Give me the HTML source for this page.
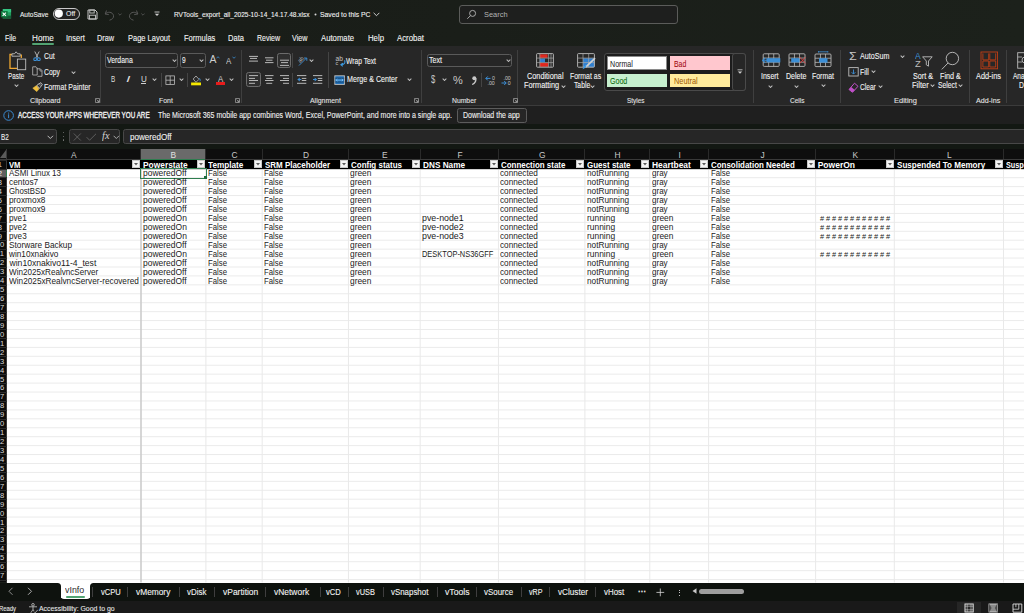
<!DOCTYPE html>
<html><head><meta charset="utf-8"><style>
html,body{margin:0;padding:0;}
body{width:1024px;height:613px;overflow:hidden;position:relative;background:#1a1e19;font-family:"Liberation Sans",sans-serif;}
div,span,svg{position:absolute;}
span{white-space:nowrap;line-height:1;transform-origin:0 0;}
</style></head><body>
<div style="left:0px;top:0px;width:1024px;height:46px;background:linear-gradient(90deg,#181c17 0%,#1a1e19 45%,#1c211b 100%);"></div>
<div style="left:0px;top:46px;width:1024px;height:59px;background:#272727;"></div>
<div style="left:0px;top:105px;width:1024px;height:1px;background:#3b3b3b;"></div>
<div style="left:0px;top:106px;width:1024px;height:18px;background:#1f1f1f;"></div>
<div style="left:0px;top:124px;width:1024px;height:24.5px;background:#131813;"></div>
<svg style="left:0px;top:8px" width="12" height="12" viewBox="0 0 12 12"><rect x="2.8" y="1" width="8.3" height="10" rx="0.8" fill="#1f9d5c"/><rect x="2.8" y="1" width="8.3" height="3.3" fill="#33c481"/><rect x="2.8" y="7.6" width="8.3" height="3.4" fill="#185c37"/><rect x="0.9" y="3" width="6.8" height="6.3" rx="0.6" fill="#107c41"/><path d="M2.6 4.6 L5.9 7.8 M5.9 4.6 L2.6 7.8" stroke="#fff" stroke-width="1.1"/></svg>
<div style="left:52.9px;top:7.5px;width:27px;height:12.3px;background:#232323;border:1px solid #c9c9c9;box-sizing:border-box;border-radius:6.2px;"></div>
<svg style="left:54px;top:9px" width="10" height="10" viewBox="0 0 10 10"><circle cx="4.8" cy="4.6" r="4.1" fill="#ffffff"/></svg>
<svg style="left:87px;top:8.5px" width="11" height="11" viewBox="0 0 11 11"><path d="M1 1 H8 L10 3 V10 H1 Z" fill="none" stroke="#c9c9c9" stroke-width="1"/><rect x="2.8" y="1" width="4.4" height="3" fill="none" stroke="#c9c9c9" stroke-width="0.9"/><rect x="2.5" y="6.2" width="6" height="3.8" fill="none" stroke="#c9c9c9" stroke-width="0.9"/></svg>
<svg style="left:104px;top:8.5px" width="11" height="12" viewBox="0 0 11 12"><path d="M2.5 1.5 L1.2 5 L4.8 5.6 M1.4 5 C3.5 2.5 8.5 2.5 9.5 6.5 C10 9 8 10.5 5.5 11.2" fill="none" stroke="#5c5c5c" stroke-width="0.9"/></svg>
<svg style="left:118px;top:12.5px" width="4" height="3" viewBox="0 0 4 3"><path d="M0.3 0.5 L2 2.2 L3.7 0.5" fill="none" stroke="#5c5c5c" stroke-width="0.8"/></svg>
<svg style="left:127.5px;top:8.5px" width="11" height="12" viewBox="0 0 11 12"><path d="M8.5 1.5 L9.8 5 L6.2 5.6 M9.6 5 C7.5 2.5 2.5 2.5 1.5 6.5 C1 9 3 10.5 5.5 11.2" fill="none" stroke="#5c5c5c" stroke-width="0.9"/></svg>
<svg style="left:141px;top:12.5px" width="4" height="3" viewBox="0 0 4 3"><path d="M0.3 0.5 L2 2.2 L3.7 0.5" fill="none" stroke="#5c5c5c" stroke-width="0.8"/></svg>
<svg style="left:153.5px;top:11px" width="6" height="6" viewBox="0 0 6 6"><path d="M0.5 1 H5.5" stroke="#d0d0d0" stroke-width="0.9"/><path d="M0.8 2.8 L3 5 L5.2 2.8 Z" fill="#d0d0d0"/></svg>
<svg style="left:313.5px;top:12.5px" width="3" height="3" viewBox="0 0 3 3"><circle cx="1.5" cy="1.5" r="1" fill="#d8d8d8"/></svg>
<svg style="left:372.5px;top:11.5px" width="7" height="5" viewBox="0 0 7 5"><path d="M0.6 0.8 L3.5 3.7 L6.4 0.8" fill="none" stroke="#e0e0e0" stroke-width="0.9"/></svg>
<div style="left:459px;top:4.5px;width:219.3px;height:19px;background:#1e1f1e;border:1px solid #5b5c5a;box-sizing:border-box;border-radius:3px;"></div>
<svg style="left:466px;top:8.5px" width="12" height="12" viewBox="0 0 12 12"><circle cx="6.6" cy="4.4" r="3.0" fill="none" stroke="#b8b8b8" stroke-width="0.9"/><path d="M4.5 6.6 L1.3 9.8" stroke="#b8b8b8" stroke-width="0.9"/></svg>
<div style="left:32px;top:43px;width:22px;height:2px;background:#52a372;border-radius:1px;"></div>
<div style="left:100px;top:49.5px;width:1px;height:53px;background:#3f3f3f;"></div>
<div style="left:241px;top:49.5px;width:1px;height:53px;background:#3f3f3f;"></div>
<div style="left:421px;top:49.5px;width:1px;height:53px;background:#3f3f3f;"></div>
<div style="left:517px;top:49.5px;width:1px;height:53px;background:#3f3f3f;"></div>
<div style="left:753px;top:49.5px;width:1px;height:53px;background:#3f3f3f;"></div>
<div style="left:840px;top:49.5px;width:1px;height:53px;background:#3f3f3f;"></div>
<div style="left:969px;top:49.5px;width:1px;height:53px;background:#3f3f3f;"></div>
<div style="left:1006px;top:49.5px;width:1px;height:53px;background:#3f3f3f;"></div>
<svg style="left:94.5px;top:97.5px" width="5" height="5" viewBox="0 0 5 5"><path d="M0.5 0.5 H4.5 V4.5 H0.5 Z" fill="none" stroke="#a8a8a8" stroke-width="0.7"/><path d="M1.6 1.6 L4 4 M2.2 4 H4 V2.2" fill="none" stroke="#a8a8a8" stroke-width="0.7"/></svg>
<svg style="left:235.3px;top:97.5px" width="5" height="5" viewBox="0 0 5 5"><path d="M0.5 0.5 H4.5 V4.5 H0.5 Z" fill="none" stroke="#a8a8a8" stroke-width="0.7"/><path d="M1.6 1.6 L4 4 M2.2 4 H4 V2.2" fill="none" stroke="#a8a8a8" stroke-width="0.7"/></svg>
<svg style="left:413.8px;top:97.5px" width="5" height="5" viewBox="0 0 5 5"><path d="M0.5 0.5 H4.5 V4.5 H0.5 Z" fill="none" stroke="#a8a8a8" stroke-width="0.7"/><path d="M1.6 1.6 L4 4 M2.2 4 H4 V2.2" fill="none" stroke="#a8a8a8" stroke-width="0.7"/></svg>
<svg style="left:513px;top:97.5px" width="5" height="5" viewBox="0 0 5 5"><path d="M0.5 0.5 H4.5 V4.5 H0.5 Z" fill="none" stroke="#a8a8a8" stroke-width="0.7"/><path d="M1.6 1.6 L4 4 M2.2 4 H4 V2.2" fill="none" stroke="#a8a8a8" stroke-width="0.7"/></svg>
<svg style="left:8px;top:50px" width="20" height="22" viewBox="0 0 20 22"><path d="M3.9 4.4 H2 V18.3 H9" fill="none" stroke="#f0a830" stroke-width="1.3"/><path d="M13.3 4.4 V8" fill="none" stroke="#f0a830" stroke-width="1.3"/><path d="M3.9 6.2 V3.8 H6.5 L8.1 1.8 L9.7 3.8 H12.2 V6.2 Z" fill="none" stroke="#bdbdbd" stroke-width="0.9"/><rect x="9.4" y="9.1" width="8.3" height="10.6" fill="#262626" stroke="#bdbdbd" stroke-width="0.9"/></svg>
<svg style="left:13.5px;top:84.2px" width="5" height="4" viewBox="0 0 5 4"><path d="M0.5 0.8 L2.5 2.9 L4.5 0.8 L3.6 0.8 L2.5 1.9 L1.4 0.8 Z" fill="#d4d4d4" stroke="#d4d4d4" stroke-width="0.35"/></svg>
<svg style="left:33px;top:51px" width="8" height="10" viewBox="0 0 8 10"><path d="M1.8 0.5 L5 6.8 M6.2 0.5 L3 6.8" stroke="#bdbdbd" stroke-width="0.9"/><circle cx="2.2" cy="8.2" r="1.4" fill="none" stroke="#3c8fd6" stroke-width="1.1"/><circle cx="5.8" cy="8.2" r="1.4" fill="none" stroke="#3c8fd6" stroke-width="1.1"/></svg>
<svg style="left:31.5px;top:66px" width="11" height="11" viewBox="0 0 11 11"><path d="M0.7 0.8 H4 L5.2 2 V9 H0.7 Z" fill="none" stroke="#bdbdbd" stroke-width="0.8"/><path d="M4.6 2.8 H8.3 L10 4.5 V10.3 H5.4" fill="none" stroke="#bdbdbd" stroke-width="0.8"/><path d="M8 3 V5 H10" fill="none" stroke="#bdbdbd" stroke-width="0.7"/></svg>
<svg style="left:70.8px;top:70.5px" width="5" height="4" viewBox="0 0 5 4"><path d="M0.5 0.8 L2.5 2.9 L4.5 0.8 L3.6 0.8 L2.5 1.9 L1.4 0.8 Z" fill="#d4d4d4" stroke="#d4d4d4" stroke-width="0.35"/></svg>
<svg style="left:31.5px;top:81.5px" width="11" height="10" viewBox="0 0 11 10"><path d="M0.8 6.2 L4.5 3.6 L7 6.8 L4.8 9.6 Z" fill="#f0c040" stroke="#f0c040" stroke-width="0.6"/><path d="M5 3.2 L8.8 0.6 L10.4 2.4 L7.4 6.4 Z" fill="none" stroke="#cfcfcf" stroke-width="0.8"/><path d="M6.4 1.6 L8.8 4.4 M7.6 1 L9.6 3.3" stroke="#cfcfcf" stroke-width="0.5"/></svg>
<div style="left:105.3px;top:53.3px;width:73.1px;height:14.3px;background:#262626;border:1px solid #5a5a5a;box-sizing:border-box;border-radius:2.5px;"></div>
<svg style="left:172.3px;top:59.2px" width="5" height="4" viewBox="0 0 5 4"><path d="M0.5 0.8 L2.5 2.9 L4.5 0.8 L3.6 0.8 L2.5 1.9 L1.4 0.8 Z" fill="#d4d4d4" stroke="#d4d4d4" stroke-width="0.35"/></svg>
<div style="left:180.2px;top:53.3px;width:25.5px;height:14.3px;background:#262626;border:1px solid #5a5a5a;box-sizing:border-box;border-radius:2.5px;"></div>
<svg style="left:199.3px;top:59.2px" width="5" height="4" viewBox="0 0 5 4"><path d="M0.5 0.8 L2.5 2.9 L4.5 0.8 L3.6 0.8 L2.5 1.9 L1.4 0.8 Z" fill="#d4d4d4" stroke="#d4d4d4" stroke-width="0.35"/></svg>
<svg style="left:215.5px;top:55.5px" width="4" height="3" viewBox="0 0 4 3"><path d="M0.5 2.3 L2 0.7 L3.5 2.3" fill="none" stroke="#3c8fd6" stroke-width="0.8"/></svg>
<svg style="left:231.5px;top:55.5px" width="4" height="3" viewBox="0 0 4 3"><path d="M0.5 0.7 L2 2.3 L3.5 0.7" fill="none" stroke="#3c8fd6" stroke-width="0.8"/></svg>
<div style="left:140.5px;top:83.3px;width:5.5px;height:0.7px;background:#cfcfcf;"></div>
<svg style="left:152.0px;top:78.2px" width="5" height="4" viewBox="0 0 5 4"><path d="M0.5 0.8 L2.5 2.9 L4.5 0.8 L3.6 0.8 L2.5 1.9 L1.4 0.8 Z" fill="#d4d4d4" stroke="#d4d4d4" stroke-width="0.35"/></svg>
<div style="left:161px;top:72.8px;width:1px;height:14px;background:#444444;"></div>
<svg style="left:164.5px;top:74.5px" width="10" height="10" viewBox="0 0 10 10"><rect x="0.9" y="0.9" width="8.6" height="8.6" fill="none" stroke="#c4c4c4" stroke-width="0.75"/><path d="M5.2 0.9 V9.5 M0.9 5.2 H9.5" stroke="#c4c4c4" stroke-width="0.75"/></svg>
<svg style="left:178.5px;top:78.2px" width="5" height="4" viewBox="0 0 5 4"><path d="M0.5 0.8 L2.5 2.9 L4.5 0.8 L3.6 0.8 L2.5 1.9 L1.4 0.8 Z" fill="#d4d4d4" stroke="#d4d4d4" stroke-width="0.35"/></svg>
<div style="left:187px;top:72.8px;width:1px;height:14px;background:#444444;"></div>
<svg style="left:191px;top:74.5px" width="11" height="11" viewBox="0 0 11 11"><path d="M2.2 4 L5 1 L8 4.3 L5 7.3 Z" fill="none" stroke="#bdbdbd" stroke-width="0.8"/><path d="M8.4 3.2 C9.4 4.5 9.5 5.5 8.8 6.3" fill="none" stroke="#3c8fd6" stroke-width="0.9"/><rect x="0.1" y="7.5" width="9.9" height="2.8" fill="#f5e800"/></svg>
<svg style="left:204.6px;top:78.2px" width="5" height="4" viewBox="0 0 5 4"><path d="M0.5 0.8 L2.5 2.9 L4.5 0.8 L3.6 0.8 L2.5 1.9 L1.4 0.8 Z" fill="#d4d4d4" stroke="#d4d4d4" stroke-width="0.35"/></svg>
<div style="left:215.9px;top:82px;width:9.3px;height:2.8px;background:#e81c1c;"></div>
<svg style="left:229.0px;top:78.2px" width="5" height="4" viewBox="0 0 5 4"><path d="M0.5 0.8 L2.5 2.9 L4.5 0.8 L3.6 0.8 L2.5 1.9 L1.4 0.8 Z" fill="#d4d4d4" stroke="#d4d4d4" stroke-width="0.35"/></svg>
<svg style="left:249px;top:55px" width="14" height="14" viewBox="0 0 14 14"><rect x="0" y="0.9" width="9" height="1.0" fill="#b8b8b8"/><rect x="1" y="2.9" width="7" height="1.0" fill="#b8b8b8"/><rect x="0" y="5.6" width="9" height="1.0" fill="#b8b8b8"/></svg>
<svg style="left:264.6px;top:55px" width="14" height="14" viewBox="0 0 14 14"><rect x="0" y="2.3" width="8.5" height="1.0" fill="#b8b8b8"/><rect x="1" y="4.7" width="6.5" height="1.0" fill="#b8b8b8"/><rect x="0" y="7.1" width="8.5" height="1.0" fill="#b8b8b8"/></svg>
<div style="left:277.2px;top:53.3px;width:14.1px;height:14.3px;background:#2f2f2f;border:1px solid #6c6c6c;box-sizing:border-box;border-radius:2.5px;"></div>
<svg style="left:280px;top:55px" width="14" height="14" viewBox="0 0 14 14"><rect x="0" y="4.7" width="9" height="1.0" fill="#b8b8b8"/><rect x="1" y="7.1" width="7" height="1.0" fill="#b8b8b8"/><rect x="0" y="9.9" width="9" height="1.0" fill="#b8b8b8"/></svg>
<div style="left:292px;top:53.3px;width:1px;height:14.5px;background:#444444;"></div>
<svg style="left:296.5px;top:54.5px" width="12" height="12" viewBox="0 0 12 12"><text x="0.5" y="6" font-size="5.5" fill="#c0c0c0" font-family="Liberation Sans" transform="rotate(-45 4 4)">ab</text><path d="M2 10.5 L9.5 3" stroke="#3c8fd6" stroke-width="0.9"/><path d="M7 3 H9.8 V5.8" fill="none" stroke="#3c8fd6" stroke-width="0.9"/></svg>
<svg style="left:308.7px;top:59.2px" width="5" height="4" viewBox="0 0 5 4"><path d="M0.5 0.8 L2.5 2.9 L4.5 0.8 L3.6 0.8 L2.5 1.9 L1.4 0.8 Z" fill="#d4d4d4" stroke="#d4d4d4" stroke-width="0.35"/></svg>
<div style="left:246.2px;top:72.3px;width:14.4px;height:14.4px;background:#2f2f2f;border:1px solid #6c6c6c;box-sizing:border-box;border-radius:2.5px;"></div>
<svg style="left:249px;top:74px" width="14" height="14" viewBox="0 0 14 14"><rect x="0" y="1.1" width="9" height="1.0" fill="#b8b8b8"/><rect x="0" y="3.9" width="6" height="1.0" fill="#b8b8b8"/><rect x="0" y="6" width="9" height="1.0" fill="#b8b8b8"/><rect x="0" y="8.8" width="6" height="1.0" fill="#b8b8b8"/></svg>
<svg style="left:264.6px;top:74px" width="14" height="14" viewBox="0 0 14 14"><rect x="0" y="1.1" width="8.5" height="1.0" fill="#b8b8b8"/><rect x="1.2" y="3.9" width="6" height="1.0" fill="#b8b8b8"/><rect x="0" y="6" width="8.5" height="1.0" fill="#b8b8b8"/><rect x="1.2" y="8.8" width="6" height="1.0" fill="#b8b8b8"/></svg>
<svg style="left:280px;top:74px" width="14" height="14" viewBox="0 0 14 14"><rect x="0" y="1.1" width="9" height="1.0" fill="#b8b8b8"/><rect x="3" y="3.9" width="6" height="1.0" fill="#b8b8b8"/><rect x="0" y="6" width="9" height="1.0" fill="#b8b8b8"/><rect x="3" y="8.8" width="6" height="1.0" fill="#b8b8b8"/></svg>
<div style="left:292px;top:72.8px;width:1px;height:14.2px;background:#444444;"></div>
<svg style="left:297px;top:74px" width="10" height="10" viewBox="0 0 10 10"><rect x="0" y="1.1" width="9.3" height="1" fill="#b8b8b8"/><rect x="4.8" y="3.9" width="4.5" height="1" fill="#b8b8b8"/><rect x="4.8" y="6" width="4.5" height="1" fill="#b8b8b8"/><rect x="0" y="8.8" width="9.3" height="1" fill="#b8b8b8"/><path d="M0.3 5.5 L2.8 3.6 V7.4 Z" fill="#3c8fd6"/><rect x="2" y="5" width="2.3" height="1" fill="#3c8fd6"/></svg>
<svg style="left:313px;top:74px" width="10" height="10" viewBox="0 0 10 10"><rect x="0" y="1.1" width="9.3" height="1" fill="#b8b8b8"/><rect x="4.8" y="3.9" width="4.5" height="1" fill="#b8b8b8"/><rect x="4.8" y="6" width="4.5" height="1" fill="#b8b8b8"/><rect x="0" y="8.8" width="9.3" height="1" fill="#b8b8b8"/><path d="M4.2 5.5 L1.7 3.6 V7.4 Z" fill="#3c8fd6"/><rect x="0" y="5" width="2.3" height="1" fill="#3c8fd6"/></svg>
<div style="left:328px;top:52px;width:1px;height:36px;background:#444444;"></div>
<svg style="left:334.5px;top:55px" width="11" height="12" viewBox="0 0 11 12"><text x="0.6" y="6.3" font-size="6.6" fill="#c4c4c4" font-family="Liberation Sans">ab</text><text x="0.6" y="10.2" font-size="5.4" fill="#c4c4c4" font-family="Liberation Sans">c</text><path d="M9.6 5.2 C10.6 7.6 9.6 9.6 6.4 9.8 M7.8 8.2 L5.9 9.8 L7.8 11.2" fill="none" stroke="#3c9ae0" stroke-width="1.1"/></svg>
<svg style="left:333.5px;top:74.5px" width="11" height="10" viewBox="0 0 11 10"><rect x="0.8" y="0.8" width="9.6" height="8.6" fill="#1f6fb8" stroke="#c0c0c0" stroke-width="0.9"/><path d="M0.8 3.2 H10.4 M0.8 7 H10.4" stroke="#16314d" stroke-width="0.6"/><path d="M2.2 5.1 H9 M3.4 4 L2.2 5.1 L3.4 6.2 M7.8 4 L9 5.1 L7.8 6.2" fill="none" stroke="#8fd0ff" stroke-width="0.7"/></svg>
<svg style="left:406.5px;top:78.4px" width="5" height="4" viewBox="0 0 5 4"><path d="M0.5 0.8 L2.5 2.9 L4.5 0.8 L3.6 0.8 L2.5 1.9 L1.4 0.8 Z" fill="#d4d4d4" stroke="#d4d4d4" stroke-width="0.35"/></svg>
<div style="left:426.6px;top:53.8px;width:85.9px;height:13.7px;background:#262626;border:1px solid #5a5a5a;box-sizing:border-box;border-radius:2.5px;"></div>
<svg style="left:506.0px;top:59.2px" width="5" height="4" viewBox="0 0 5 4"><path d="M0.5 0.8 L2.5 2.9 L4.5 0.8 L3.6 0.8 L2.5 1.9 L1.4 0.8 Z" fill="#d4d4d4" stroke="#d4d4d4" stroke-width="0.35"/></svg>
<svg style="left:441.7px;top:77.9px" width="5" height="4" viewBox="0 0 5 4"><path d="M0.5 0.8 L2.5 2.9 L4.5 0.8 L3.6 0.8 L2.5 1.9 L1.4 0.8 Z" fill="#d4d4d4" stroke="#d4d4d4" stroke-width="0.35"/></svg>
<svg style="left:470.5px;top:75.5px" width="6" height="9" viewBox="0 0 6 9"><circle cx="3.3" cy="2.3" r="2" fill="#c8c8c8"/><path d="M5 2.5 C5 5.5 3.5 7.5 1.2 8.5" fill="none" stroke="#c8c8c8" stroke-width="1.3"/></svg>
<div style="left:481px;top:73px;width:1px;height:14px;background:#444444;"></div>
<svg style="left:485px;top:74.5px" width="12" height="11" viewBox="0 0 12 11"><path d="M0.8 3.4 H5.5 M2.8 1.4 L0.8 3.4 L2.8 5.4" fill="none" stroke="#3c8fd6" stroke-width="1"/><text x="7" y="5" font-size="5.2" fill="#c8c8c8" font-family="Liberation Sans">0</text><text x="2.5" y="10.3" font-size="5.2" fill="#c8c8c8" font-family="Liberation Sans">.00</text></svg>
<svg style="left:500.5px;top:74.5px" width="12" height="11" viewBox="0 0 12 11"><text x="2.5" y="5" font-size="5.2" fill="#c8c8c8" font-family="Liberation Sans">.00</text><path d="M0.5 8 H5.2 M3.2 6 L5.2 8 L3.2 10" fill="none" stroke="#3c8fd6" stroke-width="1"/><text x="6.8" y="10.3" font-size="5.2" fill="#c8c8c8" font-family="Liberation Sans">0</text></svg>
<svg style="left:535.5px;top:52.5px" width="18" height="15" viewBox="0 0 18 15"><rect x="3.8" y="1.3" width="7.8" height="3.6" fill="#e0281e"/><rect x="3.8" y="5.6" width="5.2" height="3.8" fill="#2f7fd0"/><rect x="3.8" y="9.9" width="8.6" height="3.9" fill="#e0281e"/><rect x="0.6" y="0.6" width="16.8" height="13.6" rx="0.8" fill="none" stroke="#bdbdbd" stroke-width="0.9"/><path d="M3.8 0.6 V14.2 M12.6 0.6 V14.2 M15 0.6 V14.2 M0.6 5.1 H17.4 M0.6 9.6 H17.4" stroke="#a8a8a8" stroke-width="0.7"/></svg>
<svg style="left:560.5px;top:84.7px" width="5" height="4" viewBox="0 0 5 4"><path d="M0.5 0.8 L2.5 2.9 L4.5 0.8 L3.6 0.8 L2.5 1.9 L1.4 0.8 Z" fill="#d4d4d4" stroke="#d4d4d4" stroke-width="0.35"/></svg>
<svg style="left:576.5px;top:52.5px" width="20" height="17" viewBox="0 0 20 17"><rect x="6" y="5.2" width="11.4" height="9" fill="#2f7fd0"/><rect x="0.6" y="0.6" width="16.8" height="13.6" rx="0.8" fill="none" stroke="#bdbdbd" stroke-width="0.9"/><path d="M6 0.6 V14.2 M11.7 0.6 V14.2 M0.6 5.1 H17.4 M0.6 9.6 H17.4" stroke="#a8a8a8" stroke-width="0.7"/><path d="M17.6 5.6 L9.2 13.6" stroke="#d0d0d0" stroke-width="1.6" stroke-linecap="round"/><path d="M9.6 13 C8.6 14.2 7.6 15.8 5.4 16.2 C6.6 14.6 7.2 13 8.4 12 Z" fill="#3a9ae8"/></svg>
<svg style="left:590.0px;top:84.7px" width="5" height="4" viewBox="0 0 5 4"><path d="M0.5 0.8 L2.5 2.9 L4.5 0.8 L3.6 0.8 L2.5 1.9 L1.4 0.8 Z" fill="#d4d4d4" stroke="#d4d4d4" stroke-width="0.35"/></svg>
<div style="left:604.1px;top:52.9px;width:142.4px;height:37.8px;background:#1c1c1c;border:1px solid #4a4a4a;box-sizing:border-box;border-radius:3px;"></div>
<div style="left:607px;top:56.4px;width:60.4px;height:14.1px;background:#ffffff;border:1px solid #8a8a8a;box-sizing:border-box;"></div>
<div style="left:670.2px;top:56.4px;width:59.8px;height:14.1px;background:#ffc7ce;"></div>
<div style="left:607px;top:74px;width:60.4px;height:12.8px;background:#c6efce;"></div>
<div style="left:670.2px;top:74px;width:59.8px;height:12.8px;background:#ffeb9c;"></div>
<div style="left:732.4px;top:52.9px;width:14.1px;height:37.8px;background:#262626;border:1px solid #4a4a4a;box-sizing:border-box;border-radius:3px;"></div>
<svg style="left:736.5px;top:68.5px" width="6" height="6" viewBox="0 0 6 6"><path d="M0.5 0.8 H5.5" stroke="#cfcfcf" stroke-width="0.8"/><path d="M0.8 2.5 L3 4.8 L5.2 2.5 Z" fill="#cfcfcf"/></svg>
<svg style="left:761.5px;top:53px" width="19" height="15" viewBox="0 0 19 15"><g transform="translate(0.7,0.3)"><rect x="0.5" y="0.5" width="16" height="12.6" rx="1" fill="none" stroke="#b8b8b8" stroke-width="0.9"/><path d="M5.966666666666667 0.5 V13.1 M11.033333333333333 0.5 V13.1 M0.5 4.733333333333333 H16.5 M0.5 8.866666666666667 H16.5" stroke="#b8b8b8" stroke-width="0.8"/></g><rect x="4.5" y="5.2" width="13.8" height="4.2" fill="#3c8fd6"/><path d="M5.5 7.3 H1 M3.2 4.8 L0.7 7.3 L3.2 9.8" fill="none" stroke="#3c8fd6" stroke-width="1.1"/></svg>
<svg style="left:787.5px;top:53px" width="19" height="15" viewBox="0 0 19 15"><g transform="translate(0.5,0.3)"><rect x="0.5" y="0.5" width="16" height="12.6" rx="1" fill="none" stroke="#b8b8b8" stroke-width="0.9"/><path d="M5.966666666666667 0.5 V13.1 M11.033333333333333 0.5 V13.1 M0.5 4.733333333333333 H16.5 M0.5 8.866666666666667 H16.5" stroke="#b8b8b8" stroke-width="0.8"/></g><rect x="3.2" y="5.2" width="8.3" height="4.2" fill="#3c8fd6"/><path d="M11.8 4.2 L17.5 10.4 M17.5 4.2 L11.8 10.4" stroke="#e03c3c" stroke-width="0.9"/></svg>
<svg style="left:814.2px;top:50.8px" width="19" height="17" viewBox="0 0 19 17"><path d="M4.5 0.8 H13.8 M4.5 0 V1.6 M13.8 0 V1.6" stroke="#3c8fd6" stroke-width="0.8"/><g transform="translate(0.5,2.5)"><rect x="0.5" y="0.5" width="16" height="12.6" rx="1" fill="none" stroke="#b8b8b8" stroke-width="0.9"/><path d="M5.966666666666667 0.5 V13.1 M11.033333333333333 0.5 V13.1 M0.5 4.733333333333333 H16.5 M0.5 8.866666666666667 H16.5" stroke="#b8b8b8" stroke-width="0.8"/></g><rect x="5" y="7.2" width="8.5" height="4.4" fill="#3c8fd6"/></svg>
<svg style="left:767.8px;top:84.7px" width="5" height="4" viewBox="0 0 5 4"><path d="M0.5 0.8 L2.5 2.9 L4.5 0.8 L3.6 0.8 L2.5 1.9 L1.4 0.8 Z" fill="#d4d4d4" stroke="#d4d4d4" stroke-width="0.35"/></svg>
<svg style="left:794.1px;top:84.7px" width="5" height="4" viewBox="0 0 5 4"><path d="M0.5 0.8 L2.5 2.9 L4.5 0.8 L3.6 0.8 L2.5 1.9 L1.4 0.8 Z" fill="#d4d4d4" stroke="#d4d4d4" stroke-width="0.35"/></svg>
<svg style="left:820.5px;top:83.7px" width="5" height="4" viewBox="0 0 5 4"><path d="M0.5 0.8 L2.5 2.9 L4.5 0.8 L3.6 0.8 L2.5 1.9 L1.4 0.8 Z" fill="#d4d4d4" stroke="#d4d4d4" stroke-width="0.35"/></svg>
<svg style="left:899.5px;top:54.6px" width="5" height="4" viewBox="0 0 5 4"><path d="M0.5 0.8 L2.5 2.9 L4.5 0.8 L3.6 0.8 L2.5 1.9 L1.4 0.8 Z" fill="#d4d4d4" stroke="#d4d4d4" stroke-width="0.35"/></svg>
<svg style="left:847.5px;top:67px" width="11" height="10" viewBox="0 0 11 10"><rect x="0.8" y="0.6" width="9.4" height="8.4" fill="none" stroke="#bdbdbd" stroke-width="0.9"/><path d="M5.5 2.5 V7 M3.6 5.2 L5.5 7.1 L7.4 5.2" fill="none" stroke="#3c8fd6" stroke-width="0.9"/></svg>
<svg style="left:870.5px;top:70.4px" width="5" height="4" viewBox="0 0 5 4"><path d="M0.5 0.8 L2.5 2.9 L4.5 0.8 L3.6 0.8 L2.5 1.9 L1.4 0.8 Z" fill="#d4d4d4" stroke="#d4d4d4" stroke-width="0.35"/></svg>
<svg style="left:847.5px;top:81.5px" width="11" height="11" viewBox="0 0 11 11"><path d="M1 7.5 L6.5 1.2 L10 4.3 L4.5 10.3 Z" fill="none" stroke="#c050c8" stroke-width="1"/><path d="M1 7.5 L3.2 5 L6.8 8.1 L4.5 10.3 Z" fill="#c050c8"/></svg>
<svg style="left:877.8px;top:85.4px" width="5" height="4" viewBox="0 0 5 4"><path d="M0.5 0.8 L2.5 2.9 L4.5 0.8 L3.6 0.8 L2.5 1.9 L1.4 0.8 Z" fill="#d4d4d4" stroke="#d4d4d4" stroke-width="0.35"/></svg>
<svg style="left:921.5px;top:55.5px" width="11" height="11" viewBox="0 0 11 11"><path d="M0.6 0.8 H10.2 L6.5 5 V10.2 L4.3 8.8 V5 Z" fill="none" stroke="#bdbdbd" stroke-width="0.9"/></svg>
<svg style="left:929.8px;top:84.4px" width="5" height="4" viewBox="0 0 5 4"><path d="M0.5 0.8 L2.5 2.9 L4.5 0.8 L3.6 0.8 L2.5 1.9 L1.4 0.8 Z" fill="#d4d4d4" stroke="#d4d4d4" stroke-width="0.35"/></svg>
<svg style="left:940px;top:50.5px" width="21" height="20" viewBox="0 0 21 20"><circle cx="12.4" cy="7.5" r="6.2" fill="none" stroke="#c4c4c4" stroke-width="0.9"/><path d="M8 12 L1.8 18.4" stroke="#c4c4c4" stroke-width="0.9"/></svg>
<svg style="left:957.8px;top:84.4px" width="5" height="4" viewBox="0 0 5 4"><path d="M0.5 0.8 L2.5 2.9 L4.5 0.8 L3.6 0.8 L2.5 1.9 L1.4 0.8 Z" fill="#d4d4d4" stroke="#d4d4d4" stroke-width="0.35"/></svg>
<svg style="left:979.5px;top:51px" width="18.5" height="18.5" viewBox="0 0 18.5 18.5"><rect x="1" y="1" width="16.6" height="16.8" fill="none" stroke="#c43e14" stroke-width="0.9"/><path d="M2.9 2.4 V8.9 H8.7 V2.4 M9.8 2.4 V8.9 H15.7 V2.4 M2.9 10 V16 H8.7 V10 Z M9.8 10 V16 H15.7 V10 Z" fill="none" stroke="#c43e14" stroke-width="0.85"/></svg>
<svg style="left:1016.5px;top:52px" width="10" height="17" viewBox="0 0 10 17"><rect x="0.7" y="0.7" width="12" height="15.5" fill="none" stroke="#bdbdbd" stroke-width="0.9"/><path d="M0.7 5 H5 M0.7 10 H5" stroke="#bdbdbd" stroke-width="0.8"/><circle cx="8" cy="8" r="3" fill="none" stroke="#bdbdbd" stroke-width="0.9"/></svg>
<svg style="left:2.5px;top:109.5px" width="12" height="12" viewBox="0 0 12 12"><circle cx="5.6" cy="5.5" r="4.8" fill="none" stroke="#3a8ad0" stroke-width="1"/><rect x="5.1" y="4.3" width="1" height="3.8" fill="#3a8ad0"/><rect x="5.1" y="2.6" width="1" height="1" fill="#3a8ad0"/></svg>
<div style="left:457.2px;top:108px;width:69.5px;height:14.75px;background:#262626;border:1px solid #5c5c5c;box-sizing:border-box;border-radius:2.5px;"></div>
<div style="left:-3px;top:128.8px;width:59.5px;height:14.9px;background:#262626;border:1px solid #484848;box-sizing:border-box;border-radius:2.5px;"></div>
<svg style="left:47px;top:134.5px" width="7" height="5" viewBox="0 0 7 5"><path d="M0.6 0.8 L3.3 3.5 L6 0.8" fill="none" stroke="#d0d0d0" stroke-width="0.9"/></svg>
<div style="left:62.5px;top:132.0px;width:1.2px;height:1.2px;background:#7a7a7a;border-radius:0.6px;"></div>
<div style="left:62.5px;top:135.70000000000002px;width:1.2px;height:1.2px;background:#7a7a7a;border-radius:0.6px;"></div>
<div style="left:62.5px;top:139.4px;width:1.2px;height:1.2px;background:#7a7a7a;border-radius:0.6px;"></div>
<div style="left:69.2px;top:128.8px;width:50.7px;height:14.9px;background:#262626;border:1px solid #484848;box-sizing:border-box;border-radius:2.5px;"></div>
<svg style="left:72.5px;top:132.5px" width="9" height="8" viewBox="0 0 9 8"><path d="M0.8 0.5 L7.8 7.5 M7.8 0.5 L0.8 7.5" stroke="#6c6c6c" stroke-width="0.8"/></svg>
<svg style="left:85.8px;top:132.5px" width="11" height="8" viewBox="0 0 11 8"><path d="M0.6 4.2 L3.6 7.2 L10 0.8" fill="none" stroke="#6c6c6c" stroke-width="0.8"/></svg>
<svg style="left:112.5px;top:135px" width="7" height="5" viewBox="0 0 7 5"><path d="M0.6 0.8 L3.3 3.5 L6 0.8" fill="none" stroke="#c8c8c8" stroke-width="0.8"/></svg>
<div style="left:123.1px;top:128.7px;width:910px;height:15.2px;background:#262626;border:1px solid #484848;box-sizing:border-box;border-radius:2.5px;"></div>
<div style="left:0px;top:582.5px;width:1024px;height:18.5px;background:#ffffff;"></div>
<div style="left:0px;top:582.5px;width:60.7px;height:18.5px;background:#0e120e;border-top-right-radius:3.5px;"></div>
<div style="left:90.2px;top:582.5px;width:933.8px;height:18.5px;background:#0e120e;border-top-left-radius:3.5px;"></div>
<div style="left:0px;top:601px;width:1024px;height:12px;background:#191919;"></div>
<svg style="left:6.5px;top:587px" width="8" height="9" viewBox="0 0 8 9"><path d="M5.5 0.8 L2 4.3 L5.5 7.8" fill="none" stroke="#9a9a9a" stroke-width="0.9"/></svg>
<svg style="left:25.5px;top:587px" width="8" height="9" viewBox="0 0 8 9"><path d="M2 0.8 L5.5 4.3 L2 7.8" fill="none" stroke="#bdbdbd" stroke-width="0.9"/></svg>
<div style="left:60.7px;top:598px;width:29.5px;height:3px;background:#0e120e;"></div>
<div style="left:60.7px;top:580px;width:29.5px;height:19.3px;background:#ffffff;border-bottom-left-radius:3px;border-bottom-right-radius:3px;"></div>
<div style="left:65.8px;top:595.9px;width:19.4px;height:1.9px;background:#52a574;border-radius:0.9px;"></div>
<div style="left:92px;top:587px;width:1px;height:10px;background:#3e3e3e;"></div>
<div style="left:127px;top:587px;width:1px;height:10px;background:#3e3e3e;"></div>
<div style="left:179px;top:587px;width:1px;height:10px;background:#3e3e3e;"></div>
<div style="left:214px;top:587px;width:1px;height:10px;background:#3e3e3e;"></div>
<div style="left:265px;top:587px;width:1px;height:10px;background:#3e3e3e;"></div>
<div style="left:320px;top:587px;width:1px;height:10px;background:#3e3e3e;"></div>
<div style="left:348px;top:587px;width:1px;height:10px;background:#3e3e3e;"></div>
<div style="left:383px;top:587px;width:1px;height:10px;background:#3e3e3e;"></div>
<div style="left:437px;top:587px;width:1px;height:10px;background:#3e3e3e;"></div>
<div style="left:476px;top:587px;width:1px;height:10px;background:#3e3e3e;"></div>
<div style="left:521px;top:587px;width:1px;height:10px;background:#3e3e3e;"></div>
<div style="left:549px;top:587px;width:1px;height:10px;background:#3e3e3e;"></div>
<div style="left:595px;top:587px;width:1px;height:10px;background:#3e3e3e;"></div>
<svg style="left:656px;top:587.8px" width="9" height="9" viewBox="0 0 9 9"><path d="M4.3 0.5 V8.3 M0.4 4.4 H8.2" stroke="#d8d8d8" stroke-width="0.8"/></svg>
<div style="left:679.2px;top:589.7px;width:1.1px;height:1.1px;background:#c0c0c0;"></div>
<div style="left:679.2px;top:592.3px;width:1.1px;height:1.1px;background:#c0c0c0;"></div>
<div style="left:679.2px;top:594.9px;width:1.1px;height:1.1px;background:#c0c0c0;"></div>
<svg style="left:692px;top:588.3px" width="5" height="6" viewBox="0 0 5 6"><path d="M4.5 0.3 V5.7 L0.5 3 Z" fill="#c8c8c8"/></svg>
<div style="left:699.4px;top:589px;width:44.6px;height:5.2px;background:#9e9e9e;border-radius:2.6px;"></div>
<svg style="left:27.5px;top:602.5px" width="11" height="11" viewBox="0 0 11 11"><circle cx="5" cy="1.8" r="1.3" fill="none" stroke="#c8c8c8" stroke-width="0.8"/><path d="M1 3.8 H9 M5 3.8 V6.5 L2.8 9.8 M5 6.5 L6 8" fill="none" stroke="#c8c8c8" stroke-width="0.8"/><path d="M6 8.6 L7.2 9.8 L9.8 6.8" fill="none" stroke="#c8c8c8" stroke-width="0.8"/></svg>
<div style="left:957.2px;top:602px;width:24px;height:11px;background:#262626;"></div>
<svg style="left:964px;top:603px" width="10" height="10" viewBox="0 0 10 10"><rect x="1" y="1" width="8.2" height="8" fill="none" stroke="#e0e0e0" stroke-width="1"/><path d="M3.2 1 V9 M7 1 V9 M1 3.2 H9.2 M1 6.8 H9.2" stroke="#d0d0d0" stroke-width="0.6"/></svg>
<svg style="left:988px;top:603px" width="10" height="10" viewBox="0 0 10 10"><rect x="1" y="1" width="8.4" height="8" fill="#8a8a8a" stroke="#d0d0d0" stroke-width="0.9"/><path d="M1 1 L3.2 5 L1 9 M9.4 1 L7.2 5 L9.4 9" fill="#4a4a4a" stroke="#4a4a4a" stroke-width="0.6"/></svg>
<svg style="left:1012px;top:603px" width="11" height="10" viewBox="0 0 11 10"><path d="M1 1 H9.8 V9.2 H1 Z" fill="none" stroke="#e0e0e0" stroke-width="0.9"/><path d="M1 6.2 H6.8 V1 M3.9 1 V4.2" fill="none" stroke="#e0e0e0" stroke-width="0.8"/></svg>
<div style="left:0px;top:148.5px;width:1024px;height:11px;background:#0e0e0e;"></div>
<div style="left:141px;top:148.5px;width:65px;height:10.5px;background:#6a6a6a;"></div>
<div style="left:0px;top:159px;width:1024px;height:1.7px;background:#3a3a3a;"></div>
<div style="left:141px;top:159px;width:64px;height:1.7px;background:#2e7d4f;"></div>
<svg style="left:0px;top:149px" width="6" height="9" viewBox="0 0 6 9"><polygon points="6,1 6,9 0,9" fill="#5a5a5a"/></svg>
<div style="left:140px;top:148.5px;width:1px;height:10.5px;background:#2a2a2a;"></div>
<div style="left:205px;top:148.5px;width:1px;height:10.5px;background:#2a2a2a;"></div>
<div style="left:262px;top:148.5px;width:1px;height:10.5px;background:#2a2a2a;"></div>
<div style="left:348px;top:148.5px;width:1px;height:10.5px;background:#2a2a2a;"></div>
<div style="left:420px;top:148.5px;width:1px;height:10.5px;background:#2a2a2a;"></div>
<div style="left:498px;top:148.5px;width:1px;height:10.5px;background:#2a2a2a;"></div>
<div style="left:584px;top:148.5px;width:1px;height:10.5px;background:#2a2a2a;"></div>
<div style="left:649px;top:148.5px;width:1px;height:10.5px;background:#2a2a2a;"></div>
<div style="left:708px;top:148.5px;width:1px;height:10.5px;background:#2a2a2a;"></div>
<div style="left:815px;top:148.5px;width:1px;height:10.5px;background:#2a2a2a;"></div>
<div style="left:894px;top:148.5px;width:1px;height:10.5px;background:#2a2a2a;"></div>
<div style="left:1003px;top:148.5px;width:1px;height:10.5px;background:#2a2a2a;"></div>
<div style="left:1100px;top:148.5px;width:1px;height:10.5px;background:#2a2a2a;"></div>
<div style="left:7px;top:160px;width:1017px;height:422.5px;background:#ffffff;"></div>
<svg style="left:0px;top:0px" width="1024" height="613" viewBox="0 0 1024 613"><path d="M7 177.69 H1024" stroke="#ebebeb" stroke-width="1"/><path d="M7 186.62 H1024" stroke="#ebebeb" stroke-width="1"/><path d="M7 195.55 H1024" stroke="#ebebeb" stroke-width="1"/><path d="M7 204.49 H1024" stroke="#ebebeb" stroke-width="1"/><path d="M7 213.42 H1024" stroke="#ebebeb" stroke-width="1"/><path d="M7 222.35 H1024" stroke="#ebebeb" stroke-width="1"/><path d="M7 231.28 H1024" stroke="#ebebeb" stroke-width="1"/><path d="M7 240.21 H1024" stroke="#ebebeb" stroke-width="1"/><path d="M7 249.14 H1024" stroke="#ebebeb" stroke-width="1"/><path d="M7 258.07 H1024" stroke="#ebebeb" stroke-width="1"/><path d="M7 267.00 H1024" stroke="#ebebeb" stroke-width="1"/><path d="M7 275.93 H1024" stroke="#ebebeb" stroke-width="1"/><path d="M7 284.86 H1024" stroke="#ebebeb" stroke-width="1"/><path d="M7 293.79 H1024" stroke="#ebebeb" stroke-width="1"/><path d="M7 302.73 H1024" stroke="#ebebeb" stroke-width="1"/><path d="M7 311.66 H1024" stroke="#ebebeb" stroke-width="1"/><path d="M7 320.59 H1024" stroke="#ebebeb" stroke-width="1"/><path d="M7 329.52 H1024" stroke="#ebebeb" stroke-width="1"/><path d="M7 338.45 H1024" stroke="#ebebeb" stroke-width="1"/><path d="M7 347.38 H1024" stroke="#ebebeb" stroke-width="1"/><path d="M7 356.31 H1024" stroke="#ebebeb" stroke-width="1"/><path d="M7 365.24 H1024" stroke="#ebebeb" stroke-width="1"/><path d="M7 374.17 H1024" stroke="#ebebeb" stroke-width="1"/><path d="M7 383.11 H1024" stroke="#ebebeb" stroke-width="1"/><path d="M7 392.04 H1024" stroke="#ebebeb" stroke-width="1"/><path d="M7 400.97 H1024" stroke="#ebebeb" stroke-width="1"/><path d="M7 409.90 H1024" stroke="#ebebeb" stroke-width="1"/><path d="M7 418.83 H1024" stroke="#ebebeb" stroke-width="1"/><path d="M7 427.76 H1024" stroke="#ebebeb" stroke-width="1"/><path d="M7 436.69 H1024" stroke="#ebebeb" stroke-width="1"/><path d="M7 445.62 H1024" stroke="#ebebeb" stroke-width="1"/><path d="M7 454.55 H1024" stroke="#ebebeb" stroke-width="1"/><path d="M7 463.48 H1024" stroke="#ebebeb" stroke-width="1"/><path d="M7 472.41 H1024" stroke="#ebebeb" stroke-width="1"/><path d="M7 481.35 H1024" stroke="#ebebeb" stroke-width="1"/><path d="M7 490.28 H1024" stroke="#ebebeb" stroke-width="1"/><path d="M7 499.21 H1024" stroke="#ebebeb" stroke-width="1"/><path d="M7 508.14 H1024" stroke="#ebebeb" stroke-width="1"/><path d="M7 517.07 H1024" stroke="#ebebeb" stroke-width="1"/><path d="M7 526.00 H1024" stroke="#ebebeb" stroke-width="1"/><path d="M7 534.93 H1024" stroke="#ebebeb" stroke-width="1"/><path d="M7 543.86 H1024" stroke="#ebebeb" stroke-width="1"/><path d="M7 552.79 H1024" stroke="#ebebeb" stroke-width="1"/><path d="M7 561.73 H1024" stroke="#ebebeb" stroke-width="1"/><path d="M7 570.66 H1024" stroke="#ebebeb" stroke-width="1"/><path d="M7 579.59 H1024" stroke="#ebebeb" stroke-width="1"/><path d="M205.90 168.5 V582.5" stroke="#e9e9e9" stroke-width="1"/><path d="M262.20 168.5 V582.5" stroke="#e9e9e9" stroke-width="1"/><path d="M348.45 168.5 V582.5" stroke="#e9e9e9" stroke-width="1"/><path d="M420.20 168.5 V582.5" stroke="#e9e9e9" stroke-width="1"/><path d="M498.45 168.5 V582.5" stroke="#e9e9e9" stroke-width="1"/><path d="M584.90 168.5 V582.5" stroke="#e9e9e9" stroke-width="1"/><path d="M649.80 168.5 V582.5" stroke="#e9e9e9" stroke-width="1"/><path d="M708.60 168.5 V582.5" stroke="#e9e9e9" stroke-width="1"/><path d="M815.60 168.5 V582.5" stroke="#e9e9e9" stroke-width="1"/><path d="M894.30 168.5 V582.5" stroke="#e9e9e9" stroke-width="1"/><path d="M1003.50 168.5 V582.5" stroke="#e9e9e9" stroke-width="1"/><path d="M141 168.5 V582.5" stroke="#cccccc" stroke-width="1.6"/></svg>
<div style="left:7px;top:168.7px;width:1017px;height:1px;background:#d0d0d0;"></div>
<div style="left:7px;top:160px;width:1017px;height:8.8px;background:#000000;"></div>
<div style="left:131.7px;top:160px;width:8.3px;height:8.3px;background:#f4f4f4;border:0.5px solid #c8c8c8;box-sizing:border-box;"></div>
<svg style="left:133.8px;top:163px" width="4" height="2.5" viewBox="0 0 4 2.5"><polygon points="0,0 4,0 2,2.5" fill="#5c5c5c"/></svg>
<div style="left:196.7px;top:160px;width:8.3px;height:8.3px;background:#f4f4f4;border:0.5px solid #c8c8c8;box-sizing:border-box;"></div>
<svg style="left:198.8px;top:163px" width="4" height="2.5" viewBox="0 0 4 2.5"><polygon points="0,0 4,0 2,2.5" fill="#5c5c5c"/></svg>
<div style="left:253.7px;top:160px;width:8.3px;height:8.3px;background:#f4f4f4;border:0.5px solid #c8c8c8;box-sizing:border-box;"></div>
<svg style="left:255.8px;top:163px" width="4" height="2.5" viewBox="0 0 4 2.5"><polygon points="0,0 4,0 2,2.5" fill="#5c5c5c"/></svg>
<div style="left:339.7px;top:160px;width:8.3px;height:8.3px;background:#f4f4f4;border:0.5px solid #c8c8c8;box-sizing:border-box;"></div>
<svg style="left:341.8px;top:163px" width="4" height="2.5" viewBox="0 0 4 2.5"><polygon points="0,0 4,0 2,2.5" fill="#5c5c5c"/></svg>
<div style="left:411.7px;top:160px;width:8.3px;height:8.3px;background:#f4f4f4;border:0.5px solid #c8c8c8;box-sizing:border-box;"></div>
<svg style="left:413.8px;top:163px" width="4" height="2.5" viewBox="0 0 4 2.5"><polygon points="0,0 4,0 2,2.5" fill="#5c5c5c"/></svg>
<div style="left:489.7px;top:160px;width:8.3px;height:8.3px;background:#f4f4f4;border:0.5px solid #c8c8c8;box-sizing:border-box;"></div>
<svg style="left:491.8px;top:163px" width="4" height="2.5" viewBox="0 0 4 2.5"><polygon points="0,0 4,0 2,2.5" fill="#5c5c5c"/></svg>
<div style="left:575.7px;top:160px;width:8.3px;height:8.3px;background:#f4f4f4;border:0.5px solid #c8c8c8;box-sizing:border-box;"></div>
<svg style="left:577.8px;top:163px" width="4" height="2.5" viewBox="0 0 4 2.5"><polygon points="0,0 4,0 2,2.5" fill="#5c5c5c"/></svg>
<div style="left:640.7px;top:160px;width:8.3px;height:8.3px;background:#f4f4f4;border:0.5px solid #c8c8c8;box-sizing:border-box;"></div>
<svg style="left:642.8px;top:163px" width="4" height="2.5" viewBox="0 0 4 2.5"><polygon points="0,0 4,0 2,2.5" fill="#5c5c5c"/></svg>
<div style="left:699.7px;top:160px;width:8.3px;height:8.3px;background:#f4f4f4;border:0.5px solid #c8c8c8;box-sizing:border-box;"></div>
<svg style="left:701.8px;top:163px" width="4" height="2.5" viewBox="0 0 4 2.5"><polygon points="0,0 4,0 2,2.5" fill="#5c5c5c"/></svg>
<div style="left:806.7px;top:160px;width:8.3px;height:8.3px;background:#f4f4f4;border:0.5px solid #c8c8c8;box-sizing:border-box;"></div>
<svg style="left:808.8px;top:163px" width="4" height="2.5" viewBox="0 0 4 2.5"><polygon points="0,0 4,0 2,2.5" fill="#5c5c5c"/></svg>
<div style="left:885.7px;top:160px;width:8.3px;height:8.3px;background:#f4f4f4;border:0.5px solid #c8c8c8;box-sizing:border-box;"></div>
<svg style="left:887.8px;top:163px" width="4" height="2.5" viewBox="0 0 4 2.5"><polygon points="0,0 4,0 2,2.5" fill="#5c5c5c"/></svg>
<div style="left:994.7px;top:160px;width:8.3px;height:8.3px;background:#f4f4f4;border:0.5px solid #c8c8c8;box-sizing:border-box;"></div>
<svg style="left:996.8px;top:163px" width="4" height="2.5" viewBox="0 0 4 2.5"><polygon points="0,0 4,0 2,2.5" fill="#5c5c5c"/></svg>
<div style="left:140.3px;top:167.9px;width:66.5px;height:10.7px;border:1.5px solid #2e7d4f;box-sizing:border-box;"></div>
<div style="left:204.4px;top:176.1px;width:3px;height:3px;background:#1d6b3e;"></div>
<div style="left:0px;top:159.6px;width:6.5px;height:422.9px;background:#0b0b0b;"></div>
<div style="left:6px;top:148.5px;width:1px;height:434.0px;background:#3a3a3a;"></div>
<div style="left:0px;top:168.536px;width:6.5px;height:8.936px;background:#5f5f5f;"></div>
<div style="left:6.2px;top:168.536px;width:1.2px;height:8.936px;background:#2e7d4f;"></div>
<div style="left:0px;top:159.6px;width:6.5px;height:0.8px;background:#2b2b2b;"></div>
<div style="left:0px;top:168.54px;width:6.5px;height:0.8px;background:#2b2b2b;"></div>
<div style="left:0px;top:177.47px;width:6.5px;height:0.8px;background:#2b2b2b;"></div>
<div style="left:0px;top:186.41px;width:6.5px;height:0.8px;background:#2b2b2b;"></div>
<div style="left:0px;top:195.34px;width:6.5px;height:0.8px;background:#2b2b2b;"></div>
<div style="left:0px;top:204.28px;width:6.5px;height:0.8px;background:#2b2b2b;"></div>
<div style="left:0px;top:213.22px;width:6.5px;height:0.8px;background:#2b2b2b;"></div>
<div style="left:0px;top:222.15px;width:6.5px;height:0.8px;background:#2b2b2b;"></div>
<div style="left:0px;top:231.09px;width:6.5px;height:0.8px;background:#2b2b2b;"></div>
<div style="left:0px;top:240.02px;width:6.5px;height:0.8px;background:#2b2b2b;"></div>
<div style="left:0px;top:248.96px;width:6.5px;height:0.8px;background:#2b2b2b;"></div>
<div style="left:0px;top:257.9px;width:6.5px;height:0.8px;background:#2b2b2b;"></div>
<div style="left:0px;top:266.83px;width:6.5px;height:0.8px;background:#2b2b2b;"></div>
<div style="left:0px;top:275.77px;width:6.5px;height:0.8px;background:#2b2b2b;"></div>
<div style="left:0px;top:284.7px;width:6.5px;height:0.8px;background:#2b2b2b;"></div>
<div style="left:0px;top:293.64px;width:6.5px;height:0.8px;background:#2b2b2b;"></div>
<div style="left:0px;top:302.58px;width:6.5px;height:0.8px;background:#2b2b2b;"></div>
<div style="left:0px;top:311.51px;width:6.5px;height:0.8px;background:#2b2b2b;"></div>
<div style="left:0px;top:320.45px;width:6.5px;height:0.8px;background:#2b2b2b;"></div>
<div style="left:0px;top:329.38px;width:6.5px;height:0.8px;background:#2b2b2b;"></div>
<div style="left:0px;top:338.32px;width:6.5px;height:0.8px;background:#2b2b2b;"></div>
<div style="left:0px;top:347.26px;width:6.5px;height:0.8px;background:#2b2b2b;"></div>
<div style="left:0px;top:356.19px;width:6.5px;height:0.8px;background:#2b2b2b;"></div>
<div style="left:0px;top:365.13px;width:6.5px;height:0.8px;background:#2b2b2b;"></div>
<div style="left:0px;top:374.06px;width:6.5px;height:0.8px;background:#2b2b2b;"></div>
<div style="left:0px;top:383.0px;width:6.5px;height:0.8px;background:#2b2b2b;"></div>
<div style="left:0px;top:391.94px;width:6.5px;height:0.8px;background:#2b2b2b;"></div>
<div style="left:0px;top:400.87px;width:6.5px;height:0.8px;background:#2b2b2b;"></div>
<div style="left:0px;top:409.81px;width:6.5px;height:0.8px;background:#2b2b2b;"></div>
<div style="left:0px;top:418.74px;width:6.5px;height:0.8px;background:#2b2b2b;"></div>
<div style="left:0px;top:427.68px;width:6.5px;height:0.8px;background:#2b2b2b;"></div>
<div style="left:0px;top:436.62px;width:6.5px;height:0.8px;background:#2b2b2b;"></div>
<div style="left:0px;top:445.55px;width:6.5px;height:0.8px;background:#2b2b2b;"></div>
<div style="left:0px;top:454.49px;width:6.5px;height:0.8px;background:#2b2b2b;"></div>
<div style="left:0px;top:463.42px;width:6.5px;height:0.8px;background:#2b2b2b;"></div>
<div style="left:0px;top:472.36px;width:6.5px;height:0.8px;background:#2b2b2b;"></div>
<div style="left:0px;top:481.3px;width:6.5px;height:0.8px;background:#2b2b2b;"></div>
<div style="left:0px;top:490.23px;width:6.5px;height:0.8px;background:#2b2b2b;"></div>
<div style="left:0px;top:499.17px;width:6.5px;height:0.8px;background:#2b2b2b;"></div>
<div style="left:0px;top:508.1px;width:6.5px;height:0.8px;background:#2b2b2b;"></div>
<div style="left:0px;top:517.04px;width:6.5px;height:0.8px;background:#2b2b2b;"></div>
<div style="left:0px;top:525.98px;width:6.5px;height:0.8px;background:#2b2b2b;"></div>
<div style="left:0px;top:534.91px;width:6.5px;height:0.8px;background:#2b2b2b;"></div>
<div style="left:0px;top:543.85px;width:6.5px;height:0.8px;background:#2b2b2b;"></div>
<div style="left:0px;top:552.78px;width:6.5px;height:0.8px;background:#2b2b2b;"></div>
<div style="left:0px;top:561.72px;width:6.5px;height:0.8px;background:#2b2b2b;"></div>
<div style="left:0px;top:570.66px;width:6.5px;height:0.8px;background:#2b2b2b;"></div>
<div style="left:0px;top:579.59px;width:6.5px;height:0.8px;background:#2b2b2b;"></div>
<span style="left:20.20px;top:10.81px;font-size:7.2px;color:#f2f2f2;transform:scaleX(0.9111);-webkit-text-stroke:0.1px #f2f2f2;">AutoSave</span>
<span style="left:66.40px;top:10.21px;font-size:7.2px;color:#ececec;transform:scaleX(0.9728);-webkit-text-stroke:0.1px #ececec;">Off</span>
<span style="left:173.80px;top:10.91px;font-size:7.2px;color:#f2f2f2;transform:scaleX(0.9102);-webkit-text-stroke:0.1px #f2f2f2;">RVTools_export_all_2025-10-14_14.17.48.xlsx</span>
<span style="left:319.80px;top:10.91px;font-size:7.2px;color:#f2f2f2;transform:scaleX(0.9411);-webkit-text-stroke:0.1px #f2f2f2;">Saved to this PC</span>
<span style="left:484.00px;top:10.94px;font-size:7.4px;color:#b4b4b4;transform:scaleX(1.0083);">Search</span>
<span style="left:4.70px;top:33.72px;font-size:8.6px;color:#f4f4f4;transform:scaleX(0.8104);-webkit-text-stroke:0.1px #f4f4f4;">File</span>
<span style="left:31.80px;top:33.72px;font-size:8.6px;color:#f4f4f4;transform:scaleX(0.9506);-webkit-text-stroke:0.1px #f4f4f4;">Home</span>
<span style="left:65.60px;top:33.72px;font-size:8.6px;color:#f4f4f4;transform:scaleX(0.8776);-webkit-text-stroke:0.1px #f4f4f4;">Insert</span>
<span style="left:97.20px;top:33.72px;font-size:8.6px;color:#f4f4f4;transform:scaleX(0.8538);-webkit-text-stroke:0.1px #f4f4f4;">Draw</span>
<span style="left:128.40px;top:33.72px;font-size:8.6px;color:#f4f4f4;transform:scaleX(0.8717);-webkit-text-stroke:0.1px #f4f4f4;">Page Layout</span>
<span style="left:183.90px;top:33.72px;font-size:8.6px;color:#f4f4f4;transform:scaleX(0.8756);-webkit-text-stroke:0.1px #f4f4f4;">Formulas</span>
<span style="left:227.60px;top:33.72px;font-size:8.6px;color:#f4f4f4;transform:scaleX(0.8817);-webkit-text-stroke:0.1px #f4f4f4;">Data</span>
<span style="left:256.70px;top:33.72px;font-size:8.6px;color:#f4f4f4;transform:scaleX(0.8146);-webkit-text-stroke:0.1px #f4f4f4;">Review</span>
<span style="left:292.20px;top:33.72px;font-size:8.6px;color:#f4f4f4;transform:scaleX(0.8357);-webkit-text-stroke:0.1px #f4f4f4;">View</span>
<span style="left:321.20px;top:33.72px;font-size:8.6px;color:#f4f4f4;transform:scaleX(0.8999);-webkit-text-stroke:0.1px #f4f4f4;">Automate</span>
<span style="left:367.60px;top:33.72px;font-size:8.6px;color:#f4f4f4;transform:scaleX(0.9053);-webkit-text-stroke:0.1px #f4f4f4;">Help</span>
<span style="left:396.50px;top:33.72px;font-size:8.6px;color:#f4f4f4;transform:scaleX(0.9097);-webkit-text-stroke:0.1px #f4f4f4;">Acrobat</span>
<span style="left:29.95px;top:96.63px;font-size:8.0px;color:#e4e4e4;transform:scaleX(0.8907);-webkit-text-stroke:0.1px #e4e4e4;">Clipboard</span>
<span style="left:158.75px;top:96.63px;font-size:8.0px;color:#e4e4e4;transform:scaleX(0.8639);-webkit-text-stroke:0.1px #e4e4e4;">Font</span>
<span style="left:310.25px;top:96.63px;font-size:8.0px;color:#e4e4e4;transform:scaleX(0.8665);-webkit-text-stroke:0.1px #e4e4e4;">Alignment</span>
<span style="left:452.45px;top:96.63px;font-size:8.0px;color:#e4e4e4;transform:scaleX(0.8510);-webkit-text-stroke:0.1px #e4e4e4;">Number</span>
<span style="left:626.65px;top:96.63px;font-size:8.0px;color:#e4e4e4;transform:scaleX(0.8033);-webkit-text-stroke:0.1px #e4e4e4;">Styles</span>
<span style="left:789.55px;top:96.63px;font-size:8.0px;color:#e4e4e4;transform:scaleX(0.8155);-webkit-text-stroke:0.1px #e4e4e4;">Cells</span>
<span style="left:893.75px;top:96.63px;font-size:8.0px;color:#e4e4e4;transform:scaleX(0.9370);-webkit-text-stroke:0.1px #e4e4e4;">Editing</span>
<span style="left:975.90px;top:96.63px;font-size:8.0px;color:#e4e4e4;transform:scaleX(0.8922);-webkit-text-stroke:0.1px #e4e4e4;">Add-ins</span>
<span style="left:7.90px;top:73.06px;font-size:8.2px;color:#f2f2f2;transform:scaleX(0.7716);-webkit-text-stroke:0.1px #f2f2f2;">Paste</span>
<span style="left:44.00px;top:52.96px;font-size:8.2px;color:#f2f2f2;transform:scaleX(0.8391);-webkit-text-stroke:0.1px #f2f2f2;">Cut</span>
<span style="left:44.00px;top:69.16px;font-size:8.2px;color:#f2f2f2;transform:scaleX(0.8342);-webkit-text-stroke:0.1px #f2f2f2;">Copy</span>
<span style="left:44.00px;top:83.76px;font-size:8.2px;color:#f2f2f2;transform:scaleX(0.8618);-webkit-text-stroke:0.1px #f2f2f2;">Format Painter</span>
<span style="left:106.90px;top:57.26px;font-size:8.2px;color:#f2f2f2;transform:scaleX(0.8433);-webkit-text-stroke:0.1px #f2f2f2;">Verdana</span>
<span style="left:182.00px;top:57.26px;font-size:8.2px;color:#f2f2f2;transform:scaleX(0.8000);-webkit-text-stroke:0.1px #f2f2f2;">9</span>
<span style="left:209.60px;top:55.20px;font-size:10.4px;color:#cfcfcf;">A</span>
<span style="left:226.00px;top:56.04px;font-size:9.4px;color:#cfcfcf;transform:scaleX(0.8429);">A</span>
<span style="left:110.80px;top:74.75px;font-size:8.8px;color:#dcdcdc;transform:scaleX(0.7167);">B</span>
<span style="left:126.20px;top:74.75px;font-size:8.8px;color:#dcdcdc;transform:scaleX(1.8000);font-style:italic;">I</span>
<span style="left:140.50px;top:74.75px;font-size:8.8px;color:#dcdcdc;transform:scaleX(0.9167);">U</span>
<span style="left:217.80px;top:74.58px;font-size:9px;color:#cfcfcf;transform:scaleX(0.8667);">A</span>
<span style="left:346.30px;top:57.76px;font-size:8.2px;color:#f2f2f2;transform:scaleX(0.8203);-webkit-text-stroke:0.1px #f2f2f2;">Wrap Text</span>
<span style="left:346.50px;top:76.46px;font-size:8.2px;color:#f2f2f2;transform:scaleX(0.8697);-webkit-text-stroke:0.1px #f2f2f2;">Merge &amp; Center</span>
<span style="left:428.60px;top:57.46px;font-size:8.2px;color:#f2f2f2;transform:scaleX(0.8641);-webkit-text-stroke:0.1px #f2f2f2;">Text</span>
<span style="left:430.70px;top:75.03px;font-size:10px;color:#c8c8c8;transform:scaleX(0.7667);">$</span>
<span style="left:452.80px;top:75.11px;font-size:10.5px;color:#c8c8c8;transform:scaleX(1.0444);">%</span>
<span style="left:526.60px;top:73.16px;font-size:8.2px;color:#f2f2f2;transform:scaleX(0.8919);-webkit-text-stroke:0.1px #f2f2f2;">Conditional</span>
<span style="left:524.00px;top:82.46px;font-size:8.2px;color:#f2f2f2;transform:scaleX(0.8970);-webkit-text-stroke:0.1px #f2f2f2;">Formatting</span>
<span style="left:570.00px;top:73.16px;font-size:8.2px;color:#f2f2f2;transform:scaleX(0.8434);-webkit-text-stroke:0.1px #f2f2f2;">Format as</span>
<span style="left:574.00px;top:82.46px;font-size:8.2px;color:#f2f2f2;transform:scaleX(0.8242);-webkit-text-stroke:0.1px #f2f2f2;">Table</span>
<span style="left:610.00px;top:59.89px;font-size:8.4px;color:#1a1a1a;transform:scaleX(0.8478);">Normal</span>
<span style="left:673.50px;top:59.89px;font-size:8.4px;color:#9c0006;transform:scaleX(0.8266);">Bad</span>
<span style="left:610.00px;top:76.69px;font-size:8.4px;color:#006100;transform:scaleX(0.8449);">Good</span>
<span style="left:673.50px;top:76.69px;font-size:8.4px;color:#9c5700;transform:scaleX(0.8770);">Neutral</span>
<span style="left:761.40px;top:72.96px;font-size:8.2px;color:#f2f2f2;transform:scaleX(0.8584);-webkit-text-stroke:0.1px #f2f2f2;">Insert</span>
<span style="left:786.20px;top:72.96px;font-size:8.2px;color:#f2f2f2;transform:scaleX(0.8626);-webkit-text-stroke:0.1px #f2f2f2;">Delete</span>
<span style="left:811.90px;top:72.96px;font-size:8.2px;color:#f2f2f2;transform:scaleX(0.8479);-webkit-text-stroke:0.1px #f2f2f2;">Format</span>
<span style="left:848.90px;top:50.99px;font-size:11px;color:#c8c8c8;transform:scaleX(1.1429);">Σ</span>
<span style="left:860.20px;top:53.36px;font-size:8.2px;color:#f2f2f2;transform:scaleX(0.8713);-webkit-text-stroke:0.1px #f2f2f2;">AutoSum</span>
<span style="left:860.20px;top:68.76px;font-size:8.2px;color:#f2f2f2;transform:scaleX(0.8459);-webkit-text-stroke:0.1px #f2f2f2;">Fill</span>
<span style="left:860.20px;top:84.26px;font-size:8.2px;color:#f2f2f2;transform:scaleX(0.8065);-webkit-text-stroke:0.1px #f2f2f2;">Clear</span>
<span style="left:914.90px;top:51.91px;font-size:9.2px;color:#3c8fd6;transform:scaleX(0.9286);">A</span>
<span style="left:915.20px;top:60.21px;font-size:9.2px;color:#bdbdbd;transform:scaleX(1.0333);">Z</span>
<span style="left:913.20px;top:72.96px;font-size:8.2px;color:#f2f2f2;transform:scaleX(0.8802);-webkit-text-stroke:0.1px #f2f2f2;">Sort &amp;</span>
<span style="left:912.00px;top:82.16px;font-size:8.2px;color:#f2f2f2;transform:scaleX(0.9205);-webkit-text-stroke:0.1px #f2f2f2;">Filter</span>
<span style="left:939.90px;top:72.96px;font-size:8.2px;color:#f2f2f2;transform:scaleX(0.8801);-webkit-text-stroke:0.1px #f2f2f2;">Find &amp;</span>
<span style="left:938.40px;top:82.16px;font-size:8.2px;color:#f2f2f2;transform:scaleX(0.8305);-webkit-text-stroke:0.1px #f2f2f2;">Select</span>
<span style="left:975.90px;top:72.76px;font-size:8.2px;color:#f2f2f2;transform:scaleX(0.9000);-webkit-text-stroke:0.1px #f2f2f2;">Add-ins</span>
<span style="left:1013.20px;top:72.76px;font-size:8.2px;color:#f2f2f2;transform:scaleX(0.7992);-webkit-text-stroke:0.1px #f2f2f2;">Ana</span>
<span style="left:1019.30px;top:81.96px;font-size:8.2px;color:#f2f2f2;transform:scaleX(0.8333);-webkit-text-stroke:0.1px #f2f2f2;">D</span>
<span style="left:18.00px;top:111.49px;font-size:8.4px;color:#f2f2f2;transform:scaleX(0.7512);-webkit-text-stroke:0.1px #f2f2f2;-webkit-text-stroke:0.35px #f2f2f2;">ACCESS YOUR APPS WHEREVER YOU ARE</span>
<span style="left:157.60px;top:111.49px;font-size:8.4px;color:#f0f0f0;transform:scaleX(0.8424);-webkit-text-stroke:0.1px #f0f0f0;">The Microsoft 365 mobile app combines Word, Excel, PowerPoint, and more into a single app.</span>
<span style="left:463.00px;top:111.49px;font-size:8.4px;color:#f0f0f0;transform:scaleX(0.8400);-webkit-text-stroke:0.1px #f0f0f0;">Download the app</span>
<span style="left:1.30px;top:132.55px;font-size:8.8px;color:#f0f0f0;transform:scaleX(0.7177);-webkit-text-stroke:0.1px #f0f0f0;">B2</span>
<span style="left:101.50px;top:131.17px;font-size:9.6px;color:#d4d4d4;font-family:'Liberation Serif';transform:scaleX(1.0828);font-style:italic;">fx</span>
<span style="left:129.70px;top:132.59px;font-size:8.4px;color:#f0f0f0;transform:scaleX(0.9631);-webkit-text-stroke:0.1px #f0f0f0;">poweredOff</span>
<span style="left:65.40px;top:586.22px;font-size:8.6px;color:#2a2a2a;transform:scaleX(1.0291);">vInfo</span>
<span style="left:100.50px;top:587.92px;font-size:8.6px;color:#f2f2f2;transform:scaleX(0.8815);-webkit-text-stroke:0.1px #f2f2f2;">vCPU</span>
<span style="left:136.00px;top:587.92px;font-size:8.6px;color:#f2f2f2;transform:scaleX(0.9713);-webkit-text-stroke:0.1px #f2f2f2;">vMemory</span>
<span style="left:186.90px;top:587.92px;font-size:8.6px;color:#f2f2f2;transform:scaleX(0.9213);-webkit-text-stroke:0.1px #f2f2f2;">vDisk</span>
<span style="left:222.50px;top:587.92px;font-size:8.6px;color:#f2f2f2;transform:scaleX(0.9849);-webkit-text-stroke:0.1px #f2f2f2;">vPartition</span>
<span style="left:274.40px;top:587.92px;font-size:8.6px;color:#f2f2f2;transform:scaleX(0.9831);-webkit-text-stroke:0.1px #f2f2f2;">vNetwork</span>
<span style="left:326.00px;top:587.92px;font-size:8.6px;color:#f2f2f2;transform:scaleX(0.8847);-webkit-text-stroke:0.1px #f2f2f2;">vCD</span>
<span style="left:355.90px;top:587.92px;font-size:8.6px;color:#f2f2f2;transform:scaleX(0.8590);-webkit-text-stroke:0.1px #f2f2f2;">vUSB</span>
<span style="left:391.00px;top:587.92px;font-size:8.6px;color:#f2f2f2;transform:scaleX(0.9194);-webkit-text-stroke:0.1px #f2f2f2;">vSnapshot</span>
<span style="left:444.50px;top:587.92px;font-size:8.6px;color:#f2f2f2;transform:scaleX(1.0058);-webkit-text-stroke:0.1px #f2f2f2;">vTools</span>
<span style="left:484.40px;top:587.92px;font-size:8.6px;color:#f2f2f2;transform:scaleX(0.9229);-webkit-text-stroke:0.1px #f2f2f2;">vSource</span>
<span style="left:529.30px;top:587.92px;font-size:8.6px;color:#f2f2f2;transform:scaleX(0.8302);-webkit-text-stroke:0.1px #f2f2f2;">vRP</span>
<span style="left:557.80px;top:587.92px;font-size:8.6px;color:#f2f2f2;transform:scaleX(0.9509);-webkit-text-stroke:0.1px #f2f2f2;">vCluster</span>
<span style="left:603.50px;top:587.92px;font-size:8.6px;color:#f2f2f2;transform:scaleX(0.9168);-webkit-text-stroke:0.1px #f2f2f2;">vHost</span>
<span style="left:637.50px;top:588.38px;font-size:9px;color:#f2f2f2;font-weight:bold;transform:scaleX(0.9382);-webkit-text-stroke:0.1px #f2f2f2;">···</span>
<span style="left:-0.80px;top:604.97px;font-size:7.6px;color:#e8e8e8;transform:scaleX(0.7764);-webkit-text-stroke:0.1px #e8e8e8;">Ready</span>
<span style="left:39.30px;top:604.97px;font-size:7.6px;color:#e8e8e8;transform:scaleX(0.9104);-webkit-text-stroke:0.1px #e8e8e8;">Accessibility: Good to go</span>
<span style="left:71.10px;top:150.79px;font-size:8.4px;color:#c9c9c9;">A</span>
<span style="left:170.60px;top:150.79px;font-size:8.4px;color:#e0e0e0;">B</span>
<span style="left:231.60px;top:150.79px;font-size:8.4px;color:#c9c9c9;">C</span>
<span style="left:303.10px;top:150.79px;font-size:8.4px;color:#c9c9c9;">D</span>
<span style="left:382.10px;top:150.79px;font-size:8.4px;color:#c9c9c9;">E</span>
<span style="left:457.60px;top:150.79px;font-size:8.4px;color:#c9c9c9;">F</span>
<span style="left:539.10px;top:150.79px;font-size:8.4px;color:#c9c9c9;">G</span>
<span style="left:614.60px;top:150.79px;font-size:8.4px;color:#c9c9c9;">H</span>
<span style="left:678.60px;top:150.79px;font-size:8.4px;color:#c9c9c9;">I</span>
<span style="left:760.60px;top:150.79px;font-size:8.4px;color:#c9c9c9;">J</span>
<span style="left:852.60px;top:150.79px;font-size:8.4px;color:#c9c9c9;">K</span>
<span style="left:947.10px;top:150.79px;font-size:8.4px;color:#c9c9c9;">L</span>
<span style="left:1049.10px;top:150.79px;font-size:8.4px;color:#c9c9c9;">M</span>
<span style="left:9.20px;top:160.70px;font-size:8.5px;color:#ffffff;font-weight:bold;transform:scaleX(0.8998);">VM</span>
<span style="left:143.40px;top:160.70px;font-size:8.5px;color:#ffffff;font-weight:bold;transform:scaleX(0.9863);">Powerstate</span>
<span style="left:208.40px;top:160.70px;font-size:8.5px;color:#ffffff;font-weight:bold;transform:scaleX(0.9633);">Template</span>
<span style="left:264.70px;top:160.70px;font-size:8.5px;color:#ffffff;font-weight:bold;transform:scaleX(0.9369);">SRM Placeholder</span>
<span style="left:350.60px;top:160.70px;font-size:8.5px;color:#ffffff;font-weight:bold;transform:scaleX(0.9381);">Config status</span>
<span style="left:423.00px;top:160.70px;font-size:8.5px;color:#ffffff;font-weight:bold;transform:scaleX(0.9673);">DNS Name</span>
<span style="left:500.90px;top:160.70px;font-size:8.5px;color:#ffffff;font-weight:bold;transform:scaleX(0.9332);">Connection state</span>
<span style="left:587.40px;top:160.70px;font-size:8.5px;color:#ffffff;font-weight:bold;transform:scaleX(0.9406);">Guest state</span>
<span style="left:652.40px;top:160.70px;font-size:8.5px;color:#ffffff;font-weight:bold;transform:scaleX(0.9904);">Heartbeat</span>
<span style="left:711.40px;top:160.70px;font-size:8.5px;color:#ffffff;font-weight:bold;transform:scaleX(0.9337);">Consolidation Needed</span>
<span style="left:817.70px;top:160.70px;font-size:8.5px;color:#ffffff;font-weight:bold;">PowerOn</span>
<span style="left:896.60px;top:160.70px;font-size:8.5px;color:#ffffff;font-weight:bold;transform:scaleX(0.9490);">Suspended To Memory</span>
<span style="left:1006.40px;top:160.70px;font-size:8.5px;color:#ffffff;font-weight:bold;transform:scaleX(0.8549);">Suspended</span>
<span style="left:8.50px;top:169.36px;font-size:8.6px;color:#1a1a1a;transform:scaleX(0.9303);">ASMI Linux 13</span>
<span style="left:142.60px;top:169.36px;font-size:8.6px;color:#1a1a1a;transform:scaleX(0.9848);">poweredOff</span>
<span style="left:207.80px;top:169.36px;font-size:8.6px;color:#1a1a1a;transform:scaleX(0.9042);">False</span>
<span style="left:264.30px;top:169.36px;font-size:8.6px;color:#1a1a1a;transform:scaleX(0.9042);">False</span>
<span style="left:349.90px;top:169.36px;font-size:8.6px;color:#1a1a1a;transform:scaleX(0.9730);">green</span>
<span style="left:500.20px;top:169.36px;font-size:8.6px;color:#1a1a1a;transform:scaleX(0.9554);">connected</span>
<span style="left:586.70px;top:169.36px;font-size:8.6px;color:#1a1a1a;transform:scaleX(0.9575);">notRunning</span>
<span style="left:651.70px;top:169.36px;font-size:8.6px;color:#1a1a1a;transform:scaleX(0.9357);">gray</span>
<span style="left:710.70px;top:169.36px;font-size:8.6px;color:#1a1a1a;transform:scaleX(0.9042);">False</span>
<span style="left:8.50px;top:178.29px;font-size:8.6px;color:#1a1a1a;transform:scaleX(0.9697);">centos7</span>
<span style="left:142.60px;top:178.29px;font-size:8.6px;color:#1a1a1a;transform:scaleX(0.9848);">poweredOff</span>
<span style="left:207.80px;top:178.29px;font-size:8.6px;color:#1a1a1a;transform:scaleX(0.9042);">False</span>
<span style="left:264.30px;top:178.29px;font-size:8.6px;color:#1a1a1a;transform:scaleX(0.9042);">False</span>
<span style="left:349.90px;top:178.29px;font-size:8.6px;color:#1a1a1a;transform:scaleX(0.9730);">green</span>
<span style="left:500.20px;top:178.29px;font-size:8.6px;color:#1a1a1a;transform:scaleX(0.9554);">connected</span>
<span style="left:586.70px;top:178.29px;font-size:8.6px;color:#1a1a1a;transform:scaleX(0.9575);">notRunning</span>
<span style="left:651.70px;top:178.29px;font-size:8.6px;color:#1a1a1a;transform:scaleX(0.9357);">gray</span>
<span style="left:710.70px;top:178.29px;font-size:8.6px;color:#1a1a1a;transform:scaleX(0.9042);">False</span>
<span style="left:8.50px;top:187.23px;font-size:8.6px;color:#1a1a1a;transform:scaleX(0.9061);">GhostBSD</span>
<span style="left:142.60px;top:187.23px;font-size:8.6px;color:#1a1a1a;transform:scaleX(0.9848);">poweredOff</span>
<span style="left:207.80px;top:187.23px;font-size:8.6px;color:#1a1a1a;transform:scaleX(0.9042);">False</span>
<span style="left:264.30px;top:187.23px;font-size:8.6px;color:#1a1a1a;transform:scaleX(0.9042);">False</span>
<span style="left:349.90px;top:187.23px;font-size:8.6px;color:#1a1a1a;transform:scaleX(0.9730);">green</span>
<span style="left:500.20px;top:187.23px;font-size:8.6px;color:#1a1a1a;transform:scaleX(0.9554);">connected</span>
<span style="left:586.70px;top:187.23px;font-size:8.6px;color:#1a1a1a;transform:scaleX(0.9575);">notRunning</span>
<span style="left:651.70px;top:187.23px;font-size:8.6px;color:#1a1a1a;transform:scaleX(0.9357);">gray</span>
<span style="left:710.70px;top:187.23px;font-size:8.6px;color:#1a1a1a;transform:scaleX(0.9042);">False</span>
<span style="left:8.50px;top:196.16px;font-size:8.6px;color:#1a1a1a;transform:scaleX(0.9644);">proxmox8</span>
<span style="left:142.60px;top:196.16px;font-size:8.6px;color:#1a1a1a;transform:scaleX(0.9848);">poweredOff</span>
<span style="left:207.80px;top:196.16px;font-size:8.6px;color:#1a1a1a;transform:scaleX(0.9042);">False</span>
<span style="left:264.30px;top:196.16px;font-size:8.6px;color:#1a1a1a;transform:scaleX(0.9042);">False</span>
<span style="left:349.90px;top:196.16px;font-size:8.6px;color:#1a1a1a;transform:scaleX(0.9730);">green</span>
<span style="left:500.20px;top:196.16px;font-size:8.6px;color:#1a1a1a;transform:scaleX(0.9554);">connected</span>
<span style="left:586.70px;top:196.16px;font-size:8.6px;color:#1a1a1a;transform:scaleX(0.9575);">notRunning</span>
<span style="left:651.70px;top:196.16px;font-size:8.6px;color:#1a1a1a;transform:scaleX(0.9357);">gray</span>
<span style="left:710.70px;top:196.16px;font-size:8.6px;color:#1a1a1a;transform:scaleX(0.9042);">False</span>
<span style="left:8.50px;top:205.10px;font-size:8.6px;color:#1a1a1a;transform:scaleX(0.9644);">proxmox9</span>
<span style="left:142.60px;top:205.10px;font-size:8.6px;color:#1a1a1a;transform:scaleX(0.9848);">poweredOff</span>
<span style="left:207.80px;top:205.10px;font-size:8.6px;color:#1a1a1a;transform:scaleX(0.9042);">False</span>
<span style="left:264.30px;top:205.10px;font-size:8.6px;color:#1a1a1a;transform:scaleX(0.9042);">False</span>
<span style="left:349.90px;top:205.10px;font-size:8.6px;color:#1a1a1a;transform:scaleX(0.9730);">green</span>
<span style="left:500.20px;top:205.10px;font-size:8.6px;color:#1a1a1a;transform:scaleX(0.9554);">connected</span>
<span style="left:586.70px;top:205.10px;font-size:8.6px;color:#1a1a1a;transform:scaleX(0.9575);">notRunning</span>
<span style="left:651.70px;top:205.10px;font-size:8.6px;color:#1a1a1a;transform:scaleX(0.9357);">gray</span>
<span style="left:710.70px;top:205.10px;font-size:8.6px;color:#1a1a1a;transform:scaleX(0.9042);">False</span>
<span style="left:8.50px;top:214.04px;font-size:8.6px;color:#1a1a1a;transform:scaleX(0.9493);">pve1</span>
<span style="left:142.60px;top:214.04px;font-size:8.6px;color:#1a1a1a;transform:scaleX(0.9877);">poweredOn</span>
<span style="left:207.80px;top:214.04px;font-size:8.6px;color:#1a1a1a;transform:scaleX(0.9042);">False</span>
<span style="left:264.30px;top:214.04px;font-size:8.6px;color:#1a1a1a;transform:scaleX(0.9042);">False</span>
<span style="left:349.90px;top:214.04px;font-size:8.6px;color:#1a1a1a;transform:scaleX(0.9730);">green</span>
<span style="left:422.30px;top:214.04px;font-size:8.6px;color:#1a1a1a;transform:scaleX(1.0261);">pve-node1</span>
<span style="left:500.20px;top:214.04px;font-size:8.6px;color:#1a1a1a;transform:scaleX(0.9554);">connected</span>
<span style="left:586.70px;top:214.04px;font-size:8.6px;color:#1a1a1a;transform:scaleX(0.9796);">running</span>
<span style="left:651.70px;top:214.04px;font-size:8.6px;color:#1a1a1a;transform:scaleX(0.9730);">green</span>
<span style="left:710.70px;top:214.04px;font-size:8.6px;color:#1a1a1a;transform:scaleX(0.9042);">False</span>
<span style="left:820.00px;top:215.05px;font-size:7.4px;color:#1a1a1a;letter-spacing:1.9px;">############</span>
<span style="left:8.50px;top:222.97px;font-size:8.6px;color:#1a1a1a;transform:scaleX(0.9493);">pve2</span>
<span style="left:142.60px;top:222.97px;font-size:8.6px;color:#1a1a1a;transform:scaleX(0.9877);">poweredOn</span>
<span style="left:207.80px;top:222.97px;font-size:8.6px;color:#1a1a1a;transform:scaleX(0.9042);">False</span>
<span style="left:264.30px;top:222.97px;font-size:8.6px;color:#1a1a1a;transform:scaleX(0.9042);">False</span>
<span style="left:349.90px;top:222.97px;font-size:8.6px;color:#1a1a1a;transform:scaleX(0.9730);">green</span>
<span style="left:422.30px;top:222.97px;font-size:8.6px;color:#1a1a1a;transform:scaleX(1.0261);">pve-node2</span>
<span style="left:500.20px;top:222.97px;font-size:8.6px;color:#1a1a1a;transform:scaleX(0.9554);">connected</span>
<span style="left:586.70px;top:222.97px;font-size:8.6px;color:#1a1a1a;transform:scaleX(0.9796);">running</span>
<span style="left:651.70px;top:222.97px;font-size:8.6px;color:#1a1a1a;transform:scaleX(0.9730);">green</span>
<span style="left:710.70px;top:222.97px;font-size:8.6px;color:#1a1a1a;transform:scaleX(0.9042);">False</span>
<span style="left:820.00px;top:223.99px;font-size:7.4px;color:#1a1a1a;letter-spacing:1.9px;">############</span>
<span style="left:8.50px;top:231.91px;font-size:8.6px;color:#1a1a1a;transform:scaleX(0.9493);">pve3</span>
<span style="left:142.60px;top:231.91px;font-size:8.6px;color:#1a1a1a;transform:scaleX(0.9877);">poweredOn</span>
<span style="left:207.80px;top:231.91px;font-size:8.6px;color:#1a1a1a;transform:scaleX(0.9042);">False</span>
<span style="left:264.30px;top:231.91px;font-size:8.6px;color:#1a1a1a;transform:scaleX(0.9042);">False</span>
<span style="left:349.90px;top:231.91px;font-size:8.6px;color:#1a1a1a;transform:scaleX(0.9730);">green</span>
<span style="left:422.30px;top:231.91px;font-size:8.6px;color:#1a1a1a;transform:scaleX(1.0261);">pve-node3</span>
<span style="left:500.20px;top:231.91px;font-size:8.6px;color:#1a1a1a;transform:scaleX(0.9554);">connected</span>
<span style="left:586.70px;top:231.91px;font-size:8.6px;color:#1a1a1a;transform:scaleX(0.9796);">running</span>
<span style="left:651.70px;top:231.91px;font-size:8.6px;color:#1a1a1a;transform:scaleX(0.9730);">green</span>
<span style="left:710.70px;top:231.91px;font-size:8.6px;color:#1a1a1a;transform:scaleX(0.9042);">False</span>
<span style="left:820.00px;top:232.92px;font-size:7.4px;color:#1a1a1a;letter-spacing:1.9px;">############</span>
<span style="left:8.50px;top:240.84px;font-size:8.6px;color:#1a1a1a;transform:scaleX(0.9625);">Storware Backup</span>
<span style="left:142.60px;top:240.84px;font-size:8.6px;color:#1a1a1a;transform:scaleX(0.9848);">poweredOff</span>
<span style="left:207.80px;top:240.84px;font-size:8.6px;color:#1a1a1a;transform:scaleX(0.9042);">False</span>
<span style="left:264.30px;top:240.84px;font-size:8.6px;color:#1a1a1a;transform:scaleX(0.9042);">False</span>
<span style="left:349.90px;top:240.84px;font-size:8.6px;color:#1a1a1a;transform:scaleX(0.9730);">green</span>
<span style="left:500.20px;top:240.84px;font-size:8.6px;color:#1a1a1a;transform:scaleX(0.9554);">connected</span>
<span style="left:586.70px;top:240.84px;font-size:8.6px;color:#1a1a1a;transform:scaleX(0.9575);">notRunning</span>
<span style="left:651.70px;top:240.84px;font-size:8.6px;color:#1a1a1a;transform:scaleX(0.9357);">gray</span>
<span style="left:710.70px;top:240.84px;font-size:8.6px;color:#1a1a1a;transform:scaleX(0.9042);">False</span>
<span style="left:9.46px;top:249.78px;font-size:8.6px;color:#1a1a1a;transform:scaleX(0.9562);">win10xnakivo</span>
<span style="left:142.60px;top:249.78px;font-size:8.6px;color:#1a1a1a;transform:scaleX(0.9877);">poweredOn</span>
<span style="left:207.80px;top:249.78px;font-size:8.6px;color:#1a1a1a;transform:scaleX(0.9042);">False</span>
<span style="left:264.30px;top:249.78px;font-size:8.6px;color:#1a1a1a;transform:scaleX(0.9042);">False</span>
<span style="left:349.90px;top:249.78px;font-size:8.6px;color:#1a1a1a;transform:scaleX(0.9730);">green</span>
<span style="left:422.30px;top:249.78px;font-size:8.6px;color:#1a1a1a;transform:scaleX(0.8649);">DESKTOP-NS36GFF</span>
<span style="left:500.20px;top:249.78px;font-size:8.6px;color:#1a1a1a;transform:scaleX(0.9554);">connected</span>
<span style="left:586.70px;top:249.78px;font-size:8.6px;color:#1a1a1a;transform:scaleX(0.9796);">running</span>
<span style="left:651.70px;top:249.78px;font-size:8.6px;color:#1a1a1a;transform:scaleX(0.9730);">green</span>
<span style="left:710.70px;top:249.78px;font-size:8.6px;color:#1a1a1a;transform:scaleX(0.9042);">False</span>
<span style="left:820.00px;top:250.80px;font-size:7.4px;color:#1a1a1a;letter-spacing:1.9px;">############</span>
<span style="left:9.50px;top:258.72px;font-size:8.6px;color:#1a1a1a;">win10xnakivo11-4_test</span>
<span style="left:142.60px;top:258.72px;font-size:8.6px;color:#1a1a1a;transform:scaleX(0.9848);">poweredOff</span>
<span style="left:207.80px;top:258.72px;font-size:8.6px;color:#1a1a1a;transform:scaleX(0.9042);">False</span>
<span style="left:264.30px;top:258.72px;font-size:8.6px;color:#1a1a1a;transform:scaleX(0.9042);">False</span>
<span style="left:349.90px;top:258.72px;font-size:8.6px;color:#1a1a1a;transform:scaleX(0.9730);">green</span>
<span style="left:500.20px;top:258.72px;font-size:8.6px;color:#1a1a1a;transform:scaleX(0.9554);">connected</span>
<span style="left:586.70px;top:258.72px;font-size:8.6px;color:#1a1a1a;transform:scaleX(0.9575);">notRunning</span>
<span style="left:651.70px;top:258.72px;font-size:8.6px;color:#1a1a1a;transform:scaleX(0.9357);">gray</span>
<span style="left:710.70px;top:258.72px;font-size:8.6px;color:#1a1a1a;transform:scaleX(0.9042);">False</span>
<span style="left:8.50px;top:267.65px;font-size:8.6px;color:#1a1a1a;transform:scaleX(0.9429);">Win2025xRealvncServer</span>
<span style="left:142.60px;top:267.65px;font-size:8.6px;color:#1a1a1a;transform:scaleX(0.9848);">poweredOff</span>
<span style="left:207.80px;top:267.65px;font-size:8.6px;color:#1a1a1a;transform:scaleX(0.9042);">False</span>
<span style="left:264.30px;top:267.65px;font-size:8.6px;color:#1a1a1a;transform:scaleX(0.9042);">False</span>
<span style="left:349.90px;top:267.65px;font-size:8.6px;color:#1a1a1a;transform:scaleX(0.9730);">green</span>
<span style="left:500.20px;top:267.65px;font-size:8.6px;color:#1a1a1a;transform:scaleX(0.9554);">connected</span>
<span style="left:586.70px;top:267.65px;font-size:8.6px;color:#1a1a1a;transform:scaleX(0.9575);">notRunning</span>
<span style="left:651.70px;top:267.65px;font-size:8.6px;color:#1a1a1a;transform:scaleX(0.9357);">gray</span>
<span style="left:710.70px;top:267.65px;font-size:8.6px;color:#1a1a1a;transform:scaleX(0.9042);">False</span>
<span style="left:8.50px;top:276.59px;font-size:8.6px;color:#1a1a1a;transform:scaleX(0.9568);">Win2025xRealvncServer-recovered</span>
<span style="left:142.60px;top:276.59px;font-size:8.6px;color:#1a1a1a;transform:scaleX(0.9848);">poweredOff</span>
<span style="left:207.80px;top:276.59px;font-size:8.6px;color:#1a1a1a;transform:scaleX(0.9042);">False</span>
<span style="left:264.30px;top:276.59px;font-size:8.6px;color:#1a1a1a;transform:scaleX(0.9042);">False</span>
<span style="left:349.90px;top:276.59px;font-size:8.6px;color:#1a1a1a;transform:scaleX(0.9730);">green</span>
<span style="left:500.20px;top:276.59px;font-size:8.6px;color:#1a1a1a;transform:scaleX(0.9554);">connected</span>
<span style="left:586.70px;top:276.59px;font-size:8.6px;color:#1a1a1a;transform:scaleX(0.9575);">notRunning</span>
<span style="left:651.70px;top:276.59px;font-size:8.6px;color:#1a1a1a;transform:scaleX(0.9357);">gray</span>
<span style="left:710.70px;top:276.59px;font-size:8.6px;color:#1a1a1a;transform:scaleX(0.9042);">False</span>
<span style="left:-2.20px;top:161.07px;font-size:7.6px;color:#d8d8d8;">1</span>
<span style="left:-2.20px;top:170.00px;font-size:7.6px;color:#e8e8e8;-webkit-text-stroke:0.1px #e8e8e8;">2</span>
<span style="left:-2.20px;top:178.94px;font-size:7.6px;color:#d8d8d8;">3</span>
<span style="left:-2.20px;top:187.87px;font-size:7.6px;color:#d8d8d8;">4</span>
<span style="left:-2.20px;top:196.81px;font-size:7.6px;color:#d8d8d8;">5</span>
<span style="left:-2.20px;top:205.75px;font-size:7.6px;color:#d8d8d8;">6</span>
<span style="left:-2.20px;top:214.68px;font-size:7.6px;color:#d8d8d8;">7</span>
<span style="left:-2.20px;top:223.62px;font-size:7.6px;color:#d8d8d8;">8</span>
<span style="left:-2.20px;top:232.55px;font-size:7.6px;color:#d8d8d8;">9</span>
<span style="left:-4.31px;top:241.49px;font-size:7.6px;color:#d8d8d8;">10</span>
<span style="left:-4.03px;top:250.43px;font-size:7.6px;color:#d8d8d8;">11</span>
<span style="left:-4.31px;top:259.36px;font-size:7.6px;color:#d8d8d8;">12</span>
<span style="left:-4.31px;top:268.30px;font-size:7.6px;color:#d8d8d8;">13</span>
<span style="left:-4.31px;top:277.23px;font-size:7.6px;color:#d8d8d8;">14</span>
<span style="left:-4.31px;top:286.17px;font-size:7.6px;color:#d8d8d8;">15</span>
<span style="left:-4.31px;top:295.11px;font-size:7.6px;color:#d8d8d8;">16</span>
<span style="left:-4.31px;top:304.04px;font-size:7.6px;color:#d8d8d8;">17</span>
<span style="left:-4.31px;top:312.98px;font-size:7.6px;color:#d8d8d8;">18</span>
<span style="left:-4.31px;top:321.91px;font-size:7.6px;color:#d8d8d8;">19</span>
<span style="left:-4.31px;top:330.85px;font-size:7.6px;color:#d8d8d8;">20</span>
<span style="left:-4.31px;top:339.79px;font-size:7.6px;color:#d8d8d8;">21</span>
<span style="left:-4.31px;top:348.72px;font-size:7.6px;color:#d8d8d8;">22</span>
<span style="left:-4.31px;top:357.66px;font-size:7.6px;color:#d8d8d8;">23</span>
<span style="left:-4.31px;top:366.59px;font-size:7.6px;color:#d8d8d8;">24</span>
<span style="left:-4.31px;top:375.53px;font-size:7.6px;color:#d8d8d8;">25</span>
<span style="left:-4.31px;top:384.47px;font-size:7.6px;color:#d8d8d8;">26</span>
<span style="left:-4.31px;top:393.40px;font-size:7.6px;color:#d8d8d8;">27</span>
<span style="left:-4.31px;top:402.34px;font-size:7.6px;color:#d8d8d8;">28</span>
<span style="left:-4.31px;top:411.27px;font-size:7.6px;color:#d8d8d8;">29</span>
<span style="left:-4.31px;top:420.21px;font-size:7.6px;color:#d8d8d8;">30</span>
<span style="left:-4.31px;top:429.15px;font-size:7.6px;color:#d8d8d8;">31</span>
<span style="left:-4.31px;top:438.08px;font-size:7.6px;color:#d8d8d8;">32</span>
<span style="left:-4.31px;top:447.02px;font-size:7.6px;color:#d8d8d8;">33</span>
<span style="left:-4.31px;top:455.95px;font-size:7.6px;color:#d8d8d8;">34</span>
<span style="left:-4.31px;top:464.89px;font-size:7.6px;color:#d8d8d8;">35</span>
<span style="left:-4.31px;top:473.83px;font-size:7.6px;color:#d8d8d8;">36</span>
<span style="left:-4.31px;top:482.76px;font-size:7.6px;color:#d8d8d8;">37</span>
<span style="left:-4.31px;top:491.70px;font-size:7.6px;color:#d8d8d8;">38</span>
<span style="left:-4.31px;top:500.63px;font-size:7.6px;color:#d8d8d8;">39</span>
<span style="left:-4.31px;top:509.57px;font-size:7.6px;color:#d8d8d8;">40</span>
<span style="left:-4.31px;top:518.51px;font-size:7.6px;color:#d8d8d8;">41</span>
<span style="left:-4.31px;top:527.44px;font-size:7.6px;color:#d8d8d8;">42</span>
<span style="left:-4.31px;top:536.38px;font-size:7.6px;color:#d8d8d8;">43</span>
<span style="left:-4.31px;top:545.31px;font-size:7.6px;color:#d8d8d8;">44</span>
<span style="left:-4.31px;top:554.25px;font-size:7.6px;color:#d8d8d8;">45</span>
<span style="left:-4.31px;top:563.19px;font-size:7.6px;color:#d8d8d8;">46</span>
<span style="left:-4.31px;top:572.12px;font-size:7.6px;color:#d8d8d8;">47</span>
</body></html>
